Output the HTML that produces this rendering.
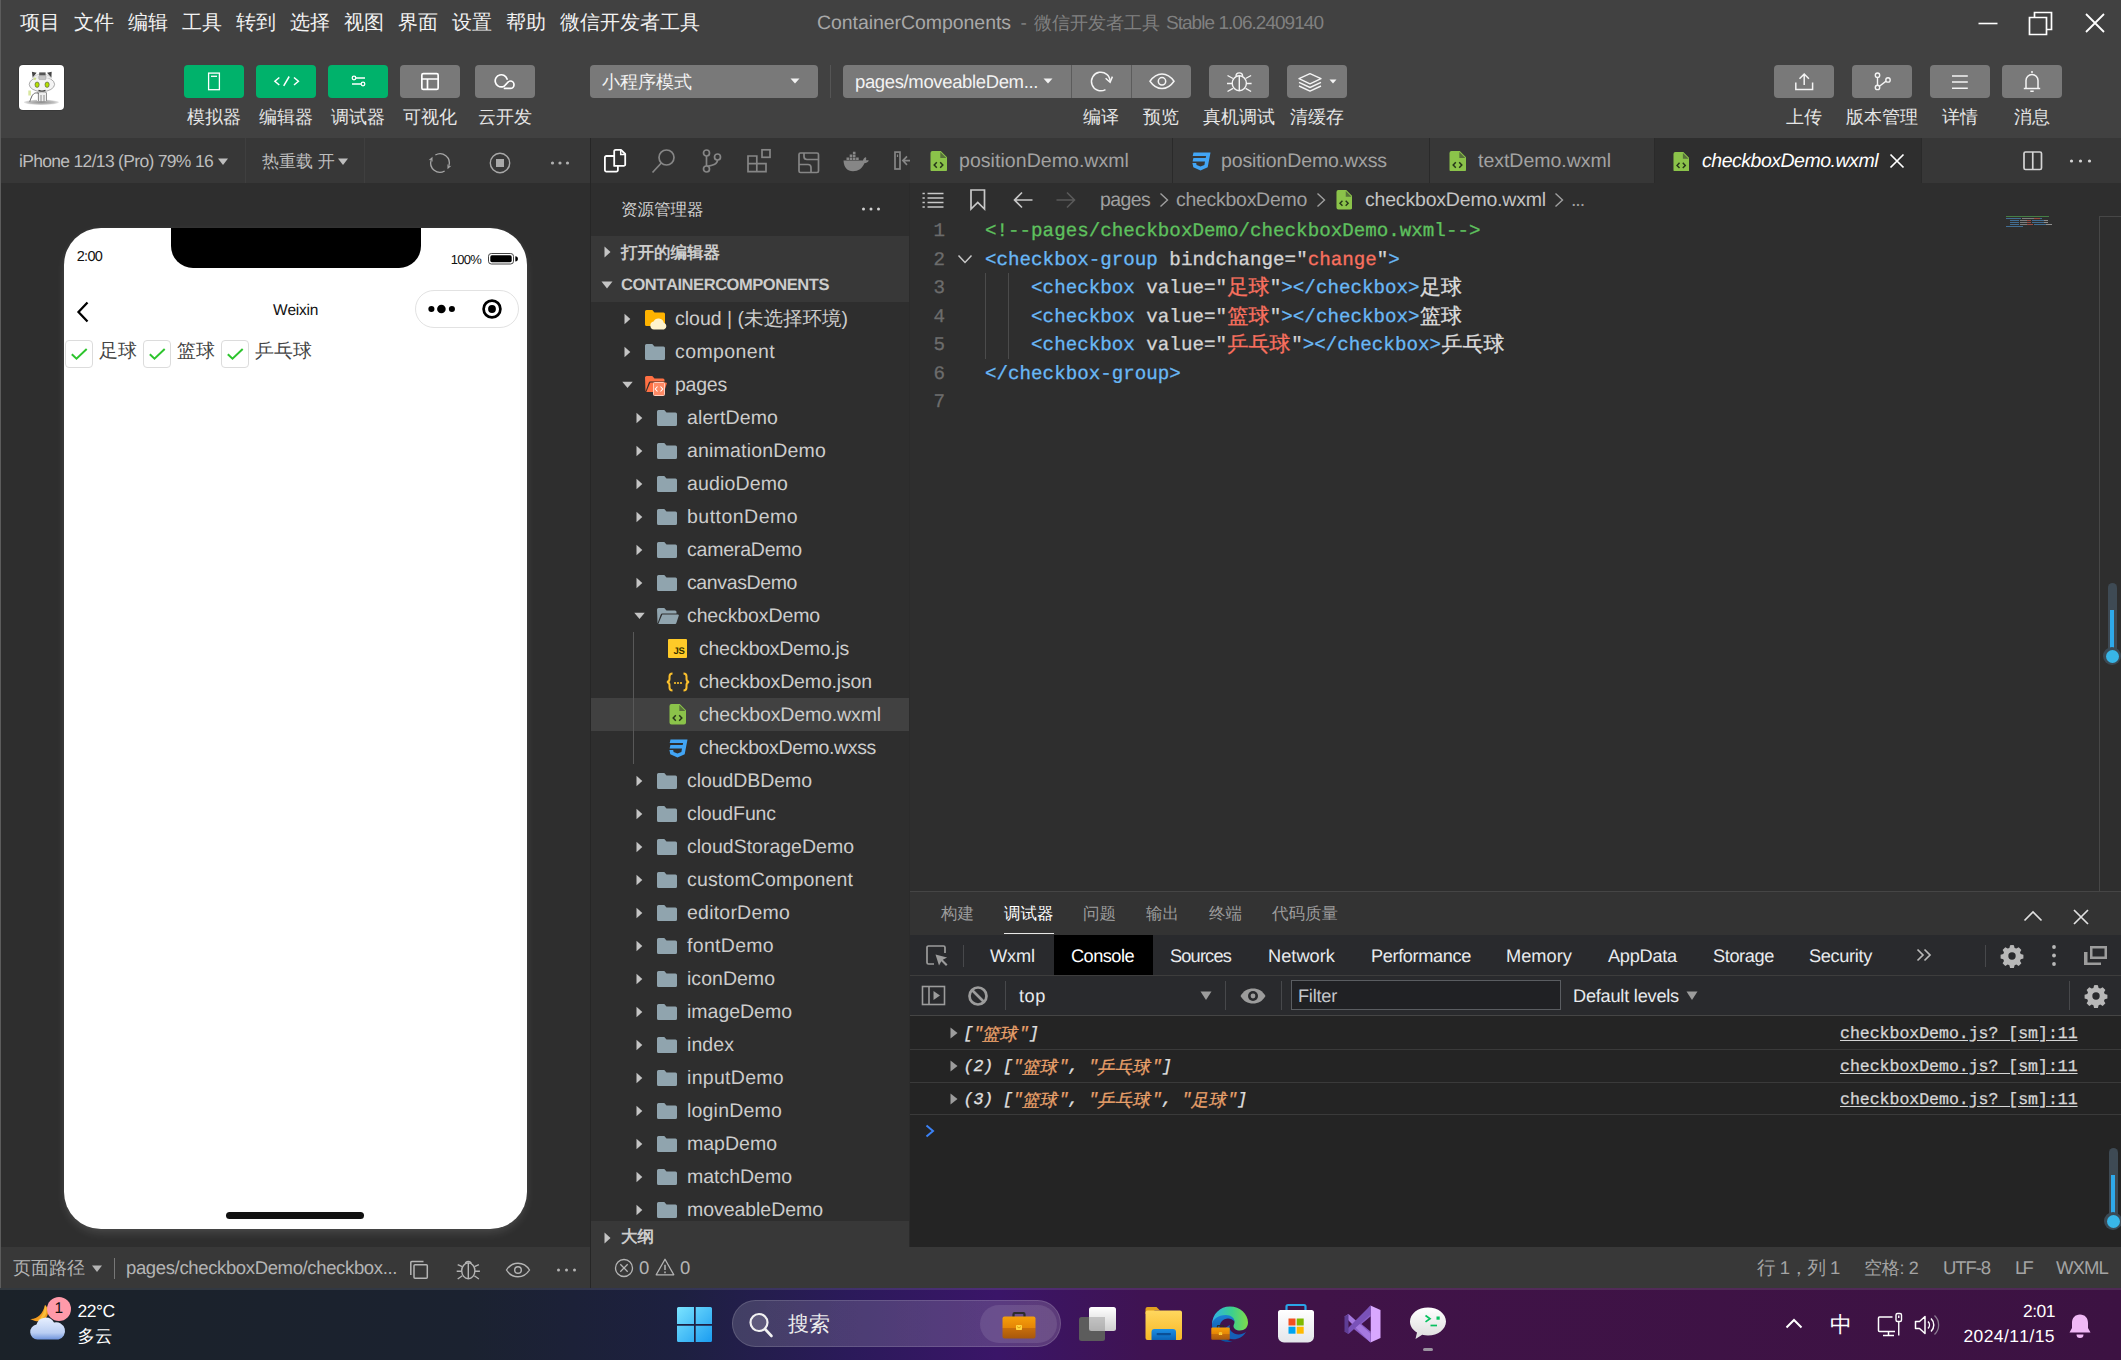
<!DOCTYPE html>
<html lang="zh"><head><meta charset="utf-8"><title>ContainerComponents</title><style>
html,body{margin:0;padding:0;background:#2e2e2e;}
body{width:2121px;height:1360px;overflow:hidden;position:relative;font-family:"Liberation Sans",sans-serif;}
#r{position:absolute;left:0;top:0;width:2121px;height:1360px;overflow:hidden;}
#r div,#r svg,#r span.a{position:absolute;white-space:nowrap;}
#r div{box-sizing:border-box;}
.m{font-family:"Liberation Mono",monospace;-webkit-text-stroke:0.3px currentColor;}
.s{font-family:"Liberation Serif",serif;}
.b{font-weight:bold;}
.i{font-style:italic;}
.cj{display:inline-block;font-size:21px;letter-spacing:0;text-align:center;font-family:"Liberation Sans",sans-serif;vertical-align:top;overflow:hidden;height:28px;}
.cj2{display:inline-block;font-size:17.5px;letter-spacing:0;text-align:center;font-family:"Liberation Sans",sans-serif;vertical-align:top;overflow:hidden;height:24px;font-style:normal;transform:skewX(-12deg);}
body{font-kerning:none;text-rendering:geometricPrecision;}
</style></head><body><div id="r">
<div style="left:0px;top:0px;width:2121px;height:138px;background:#414141;"></div>
<div style="left:0px;top:138px;width:590px;height:45px;background:#373737;"></div>
<div style="left:0px;top:183px;width:590px;height:1064px;background:#2e2e2e;"></div>
<div style="left:590px;top:138px;width:1px;height:1150px;background:#262626;"></div>
<div style="left:591px;top:138px;width:319px;height:45px;background:#333333;"></div>
<div style="left:591px;top:183px;width:319px;height:1064px;background:#2e2e2e;"></div>
<div style="left:910px;top:138px;width:1211px;height:45px;background:#373737;"></div>
<div style="left:910px;top:183px;width:1211px;height:708px;background:#2e2e2e;"></div>
<div style="left:0px;top:1247px;width:2121px;height:41px;background:#383838;"></div>
<div style="left:0px;top:1288px;width:2121px;height:72px;background:linear-gradient(90deg,#1b2229 0%,#1b2230 22%,#1d2040 32%,#2b1a5a 40%,#3a1568 47%,#3f1352 54%,#401348 62%,#3c1242 100%);"></div>
<div style="left:0px;top:1288px;width:2121px;height:2px;background:rgba(255,255,255,0.10);"></div>
<div style="left:590px;top:1247px;width:1px;height:41px;background:#262626;"></div>
<div style="left:20px;top:10px;height:26px;line-height:26px;font-size:20px;color:#f2f2f2;width:40px;">项目</div>
<div style="left:74px;top:10px;height:26px;line-height:26px;font-size:20px;color:#f2f2f2;width:40px;">文件</div>
<div style="left:128px;top:10px;height:26px;line-height:26px;font-size:20px;color:#f2f2f2;width:40px;">编辑</div>
<div style="left:182px;top:10px;height:26px;line-height:26px;font-size:20px;color:#f2f2f2;width:40px;">工具</div>
<div style="left:236px;top:10px;height:26px;line-height:26px;font-size:20px;color:#f2f2f2;width:40px;">转到</div>
<div style="left:290px;top:10px;height:26px;line-height:26px;font-size:20px;color:#f2f2f2;width:40px;">选择</div>
<div style="left:344px;top:10px;height:26px;line-height:26px;font-size:20px;color:#f2f2f2;width:40px;">视图</div>
<div style="left:398px;top:10px;height:26px;line-height:26px;font-size:20px;color:#f2f2f2;width:40px;">界面</div>
<div style="left:452px;top:10px;height:26px;line-height:26px;font-size:20px;color:#f2f2f2;width:40px;">设置</div>
<div style="left:506px;top:10px;height:26px;line-height:26px;font-size:20px;color:#f2f2f2;width:40px;">帮助</div>
<div style="left:560px;top:10px;height:26px;line-height:26px;font-size:20px;color:#f2f2f2;width:140px;">微信开发者工具</div>
<div style="left:817px;top:10.5px;height:25px;line-height:25px;font-size:19.5px;color:#a8a8a8;letter-spacing:-0.059px;">ContainerComponents</div>
<div style="left:1020.5px;top:10.5px;height:25px;line-height:25px;font-size:19px;color:#808080;">-</div>
<div style="left:1034px;top:11.5px;height:23px;line-height:23px;font-size:18px;color:#808080;width:127px;">微信开发者工具</div>
<div style="left:1166px;top:10.5px;height:25px;line-height:25px;font-size:19px;color:#808080;letter-spacing:-0.967px;">Stable 1.06.2409140</div>
<svg style="left:1975px;top:10px;" width="26" height="26" viewBox="0 0 26 26"><path d="M3.5 13.5H22.5" stroke="#fff" stroke-width="1.6" fill="none"/></svg>
<svg style="left:2027px;top:9px;" width="28" height="28" viewBox="0 0 28 28"><path d="M2.5 8.5H19.5V25.5H2.5Z M7.5 8V3.5H24.5V20.5H20" stroke="#fff" stroke-width="1.7" fill="none"/></svg>
<svg style="left:2082px;top:10px;" width="26" height="26" viewBox="0 0 26 26"><path d="M4 4L22 22M22 4L4 22" stroke="#fff" stroke-width="1.8" fill="none"/></svg>
<div style="left:19px;top:65px;width:45px;height:45px;background:#ffffff;border-radius:4px;box-shadow:0 0 0 0.5px rgba(0,0,0,.25);"></div>
<svg style="left:19px;top:65px;" width="45" height="45" viewBox="0 0 45 45">
<defs><radialGradient id="avs"><stop offset="0" stop-color="#8f8f8f"/><stop offset=".7" stop-color="#bdbdbd"/><stop offset="1" stop-color="#e8e8e8"/></radialGradient></defs>
<ellipse cx="22.4" cy="37.3" rx="17.5" ry="2.7" fill="url(#avs)"/>
<path d="M12.9 6.700l4.700 1-3.900 5z" fill="#444"/><path d="M32.700 6.700l-4.700 1 4.400 5z" fill="#444"/>
<ellipse cx="22.900" cy="19.300" rx="12.700" ry="7.300" fill="#f4f4f4" stroke="#8a8a8a" stroke-width="0.700"/>
<path d="M13 13.500c3-3.500 6-4.500 9.900-4.500s7 1 9.900 4.500" fill="#ececec" stroke="#b5b5b5" stroke-width="0.600"/>
<rect x="20.200" y="7.400" width="6.400" height="3.200" fill="#555"/><rect x="19.800" y="10.600" width="7.200" height="4" rx="0.800" fill="#c4c4c4" stroke="#9a9a9a" stroke-width="0.500"/>
<circle cx="15.800" cy="13.700" r="1.300" fill="#cfe08a"/>
<ellipse cx="18.100" cy="19.700" rx="2.100" ry="2.700" fill="#b4e000" stroke="#4a4a4a" stroke-width="0.600"/>
<ellipse cx="28.100" cy="19.700" rx="2.100" ry="2.700" fill="#b4e000" stroke="#4a4a4a" stroke-width="0.600"/>
<path d="M19.500 25.300c2 1 5 1 7 0" stroke="#444" stroke-width="1.100" fill="none"/>
<path d="M18 27.500h9.800v8.500H18z" fill="#eeeeee"/><path d="M18.300 27.500c1.500-.8 7.500-.8 9.300 0M19.500 28v8M22 30v6.500M25 30v6.500M27.500 28v8" stroke="#777" stroke-width="0.800" fill="none"/>
<path d="M19.500 28.500c-3-1.500-5.500 0-7 3.500s-1.500 4.500-1.800 4.800" stroke="#666" stroke-width="1" fill="none"/>
<rect x="9.300" y="25.500" width="2.600" height="5" fill="#cfe08a" opacity=".8"/>
</svg>
<div style="left:184px;top:65px;width:60px;height:33px;background:#00b26b;border-radius:4px;"></div>
<svg style="left:199.0px;top:66.5px;overflow:visible;" width="30" height="30" viewBox="0 0 30 30"><rect x="9.6" y="6.1" width="10.8" height="16.6" fill="none" stroke="#fff" stroke-width="1.3"/><path d="M12 9.3h6" stroke="#fff" stroke-width="1.3"/></svg>
<div style="left:187.0px;top:105.5px;height:23px;line-height:23px;font-size:18px;color:#e6e6e6;width:54px;text-align:center;">模拟器</div>
<div style="left:256px;top:65px;width:60px;height:33px;background:#00b26b;border-radius:4px;"></div>
<svg style="left:271.0px;top:66.5px;overflow:visible;" width="30" height="30" viewBox="0 0 30 30"><path d="M8.3 10.5L3.9 14.25l4.4 3.75M23 10.5l4.4 3.75L23 18M18.2 9.5l-5.5 9.4" fill="none" stroke="#fff" stroke-width="1.5"/></svg>
<div style="left:259.0px;top:105.5px;height:23px;line-height:23px;font-size:18px;color:#e6e6e6;width:54px;text-align:center;">编辑器</div>
<div style="left:328px;top:65px;width:60px;height:33px;background:#00b26b;border-radius:4px;"></div>
<svg style="left:343.0px;top:66.5px;overflow:visible;" width="30" height="30" viewBox="0 0 30 30"><path d="M12.8 11H22M9 17h9.2" stroke="#fff" stroke-width="1.3"/><circle cx="11" cy="11" r="1.8" fill="none" stroke="#fff" stroke-width="1.3"/><circle cx="20" cy="17" r="1.8" fill="none" stroke="#fff" stroke-width="1.3"/></svg>
<div style="left:331.0px;top:105.5px;height:23px;line-height:23px;font-size:18px;color:#e6e6e6;width:54px;text-align:center;">调试器</div>
<div style="left:400px;top:65px;width:60px;height:33px;background:#797979;border-radius:4px;"></div>
<svg style="left:415.0px;top:66.5px;overflow:visible;" width="30" height="30" viewBox="0 0 30 30"><rect x="6.85" y="6.55" width="16.3" height="15.9" rx="1.5" fill="none" stroke="#fff" stroke-width="1.7"/><path d="M6.85 12h16.3M12.5 12v10.4" stroke="#fff" stroke-width="1.7"/></svg>
<div style="left:403.0px;top:105.5px;height:23px;line-height:23px;font-size:18px;color:#e6e6e6;width:54px;text-align:center;">可视化</div>
<div style="left:475px;top:65px;width:60px;height:33px;background:#797979;border-radius:4px;"></div>
<svg style="left:490.0px;top:66.5px;overflow:visible;" width="30" height="30" viewBox="0 0 30 30"><path d="M17.06 12.1A6.05 6.05 0 1 0 12.31 19.79C15.5 20.3 16.5 14 20.3 14A3.7 3.7 0 0 1 20.3 21.4H14.5" fill="none" stroke="#fff" stroke-width="1.7" stroke-linecap="round"/></svg>
<div style="left:478.0px;top:105.5px;height:23px;line-height:23px;font-size:18px;color:#e6e6e6;width:54px;text-align:center;">云开发</div>
<div style="left:590px;top:65px;width:228px;height:33px;background:#797979;border-radius:4px;"></div>
<div style="left:602px;top:70.5px;height:23px;line-height:23px;font-size:18px;color:#f2f2f2;width:90px;">小程序模式</div>
<svg style="left:789px;top:77px;" width="12" height="8" viewBox="0 0 12 8"><path d="M1.5 1.5h9L6 6.5z" fill="#f2f2f2"/></svg>
<div style="left:830px;top:65px;width:1px;height:33px;background:#555;"></div>
<div style="left:843px;top:65px;width:348px;height:33px;background:#797979;border-radius:4px;"></div>
<div style="left:1071px;top:65px;width:1px;height:33px;background:#5c5c5c;"></div>
<div style="left:1131px;top:65px;width:1px;height:33px;background:#5c5c5c;"></div>
<div style="left:855px;top:70px;height:24px;line-height:24px;font-size:18.5px;color:#f2f2f2;letter-spacing:-0.362px;">pages/moveableDem...</div>
<svg style="left:1042px;top:77px;" width="12" height="8" viewBox="0 0 12 8"><path d="M1.5 1.5h9L6 6.5z" fill="#f2f2f2"/></svg>
<svg style="left:1086px;top:66.5px;" width="30" height="30" viewBox="0 0 30 30"><path d="M19.45 22.55A9.3 9.3 0 1 1 24.1 14.5" fill="none" stroke="#f4f4f4" stroke-width="1.5"/><path d="M19.6 11.2l4.5 4 2.3-5.600" fill="none" stroke="#f4f4f4" stroke-width="1.5"/></svg>
<svg style="left:1146px;top:66.5px;" width="30" height="30" viewBox="0 0 30 30"><path d="M4 14.3C8 8.5 12 7 16 7s8 1.5 12 7.3c-4 5.8-8 7.3-12 7.3S8 20.1 4 14.3z" fill="none" stroke="#f4f4f4" stroke-width="1.5"/><circle cx="16" cy="14.3" r="3.7" fill="none" stroke="#f4f4f4" stroke-width="1.5"/></svg>
<div style="left:1083px;top:105.5px;height:23px;line-height:23px;font-size:18px;color:#e6e6e6;width:36px;">编译</div>
<div style="left:1143px;top:105.5px;height:23px;line-height:23px;font-size:18px;color:#e6e6e6;width:36px;">预览</div>
<div style="left:1209px;top:65px;width:60px;height:33px;background:#797979;border-radius:4px;"></div>
<svg style="left:1224.0px;top:66.5px;overflow:visible;" width="30" height="30" viewBox="0 0 30 30"><ellipse cx="15.3" cy="16.3" rx="7.1" ry="7.5" fill="none" stroke="#f4f4f4" stroke-width="1.4"/><path d="M15.3 8.8v15M12 9.2a3.300 3.300 0 0 1 6.600 0M9 11.5L3.5 8.5M8.2 16.5H3M9 21.3l-5.500 3.200M21.600 11.5l5.500-3M22.400 16.5h5.200M21.600 21.3l5.500 3.200" fill="none" stroke="#f4f4f4" stroke-width="1.4"/></svg>
<div style="left:1203.0px;top:105.5px;height:23px;line-height:23px;font-size:18px;color:#e6e6e6;width:72px;text-align:center;">真机调试</div>
<div style="left:1287px;top:65px;width:60px;height:33px;background:#797979;border-radius:4px;"></div>
<svg style="left:1302.0px;top:66.5px;overflow:visible;" width="30" height="30" viewBox="0 0 30 30"><path d="M8 6.7L-3 11.7l11 5.100 11-5.100z M-3 15.400l11 5.100 11-5.100 M-3 19l11 5.100 11-5.100" fill="none" stroke="#f4f4f4" stroke-width="1.4" stroke-linejoin="round"/><path d="M27.500 12.500h7l-3.500 4z" fill="#f4f4f4"/></svg>
<div style="left:1290.0px;top:105.5px;height:23px;line-height:23px;font-size:18px;color:#e6e6e6;width:54px;text-align:center;">清缓存</div>
<div style="left:1774px;top:65px;width:60px;height:33px;background:#797979;border-radius:4px;"></div>
<svg style="left:1789.0px;top:66.5px;overflow:visible;" width="30" height="30" viewBox="0 0 30 30"><path d="M6.800 15.500v7.100h16.800v-7.100M15.200 18V7M10.500 11.800L15.200 7l4.700 4.800" fill="none" stroke="#f4f4f4" stroke-width="1.5"/></svg>
<div style="left:1786.0px;top:105.5px;height:23px;line-height:23px;font-size:18px;color:#e6e6e6;width:36px;text-align:center;">上传</div>
<div style="left:1852px;top:65px;width:60px;height:33px;background:#797979;border-radius:4px;"></div>
<svg style="left:1867.0px;top:66.5px;overflow:visible;" width="30" height="30" viewBox="0 0 30 30"><circle cx="10.500" cy="8.200" r="2.200" fill="none" stroke="#f4f4f4" stroke-width="1.4"/><circle cx="10.500" cy="20.400" r="2.200" fill="none" stroke="#f4f4f4" stroke-width="1.4"/><circle cx="21" cy="12.900" r="2.200" fill="none" stroke="#f4f4f4" stroke-width="1.4"/><path d="M10.500 10.400v7.800M12.400 19.200l6.700-5.100" fill="none" stroke="#f4f4f4" stroke-width="1.4"/></svg>
<div style="left:1846.0px;top:105.5px;height:23px;line-height:23px;font-size:18px;color:#e6e6e6;width:72px;text-align:center;">版本管理</div>
<div style="left:1930px;top:65px;width:60px;height:33px;background:#797979;border-radius:4px;"></div>
<svg style="left:1945.0px;top:66.5px;overflow:visible;" width="30" height="30" viewBox="0 0 30 30"><path d="M7 8.900h15.800M7 15.100h15.800M7 21.300h15.800" stroke="#f4f4f4" stroke-width="1.5"/></svg>
<div style="left:1942.0px;top:105.5px;height:23px;line-height:23px;font-size:18px;color:#e6e6e6;width:36px;text-align:center;">详情</div>
<div style="left:2002px;top:65px;width:60px;height:33px;background:#797979;border-radius:4px;"></div>
<svg style="left:2017.0px;top:66.5px;overflow:visible;" width="30" height="30" viewBox="0 0 30 30"><path d="M9 21.500v-8a6 6 0 0 1 12 0v8M6.800 21.500h16.400M13.300 24.200h3.400" fill="none" stroke="#f4f4f4" stroke-width="1.5"/><circle cx="15" cy="5" r="1" fill="#f4f4f4"/></svg>
<div style="left:2014.0px;top:105.5px;height:23px;line-height:23px;font-size:18px;color:#e6e6e6;width:36px;text-align:center;">消息</div>
<div style="left:0px;top:0px;width:1px;height:1288px;background:#5c5c5c;"></div>
<div style="left:245px;top:138px;width:1px;height:45px;background:#3f3f3f;"></div>
<div style="left:364px;top:138px;width:1px;height:45px;background:#3f3f3f;"></div>
<div style="left:19px;top:150px;height:23px;line-height:23px;font-size:17.5px;color:#bdbdbd;letter-spacing:-0.685px;">iPhone 12/13 (Pro) 79% 16</div>
<svg style="left:217px;top:157px;" width="12" height="9" viewBox="0 0 12 9"><path d="M1 1.500h10L6 8z" fill="#bdbdbd"/></svg>
<div style="left:262px;top:150.5px;height:22px;line-height:22px;font-size:17px;color:#bdbdbd;width:74px;">热重载 开</div>
<svg style="left:337px;top:157px;" width="12" height="9" viewBox="0 0 12 9"><path d="M1 1.500h10L6 8z" fill="#bdbdbd"/></svg>
<svg style="left:426px;top:149px;" width="28" height="28" viewBox="0 0 28 28"><path d="M9.35 5.95A9.3 9.3 0 0 1 22.84 16.87M18.65 22.05A9.3 9.3 0 0 1 5.16 11.13" fill="none" stroke="#a6a6a6" stroke-width="1.3"/><path d="M21.50 20.27L25.43 16.68L22.74 17.21L21.44 15.07zM6.50 7.73L2.57 11.32L5.26 10.79L6.56 12.93z" fill="#a6a6a6"/></svg>
<svg style="left:486px;top:149px;" width="28" height="28" viewBox="0 0 28 28"><circle cx="14" cy="14" r="9.700" fill="none" stroke="#a8a8a8" stroke-width="1.400"/><rect x="10" y="10" width="8" height="8" fill="#a8a8a8"/></svg>
<svg style="left:548px;top:158px;" width="24" height="10" viewBox="0 0 24 10"><circle cx="4.500" cy="5" r="1.600" fill="#b0b0b0"/><circle cx="12" cy="5" r="1.600" fill="#b0b0b0"/><circle cx="19.500" cy="5" r="1.600" fill="#b0b0b0"/></svg>
<div style="left:64px;top:228px;width:463px;height:1001px;background:#ffffff;border-radius:37px;box-shadow:0 5px 10px -1px rgba(255,255,255,0.12),0 0 6px rgba(255,255,255,0.04);"></div>
<div style="left:171px;top:228px;width:250px;height:40px;background:#000000;border-radius:0 0 22px 22px;"></div>
<div style="left:76.7px;top:247.5px;height:19px;line-height:19px;font-size:14.5px;color:#111;letter-spacing:-0.680px;">2:00</div>
<div style="left:450.7px;top:250.7px;height:17px;line-height:17px;font-size:13px;color:#111;letter-spacing:-0.737px;">100%</div>
<svg style="left:487px;top:252px;" width="32" height="14" viewBox="0 0 32 14"><rect x="1.500" y="1.500" width="25" height="10.500" rx="2.800" fill="none" stroke="#444" stroke-width="1"/><rect x="3.300" y="3.300" width="21.400" height="6.900" rx="1.600" fill="#000"/><path d="M28.300 4.200a2.600 2.600 0 0 1 0 5.200z" fill="#000"/></svg>
<svg style="left:74px;top:300px;" width="18" height="24" viewBox="0 0 18 24"><path d="M13.500 2.500L4.500 12l9 9.500" fill="none" stroke="#000" stroke-width="2.300"/></svg>
<div style="left:273px;top:301px;height:20px;line-height:20px;font-size:15.5px;color:#111;letter-spacing:-0.251px;">Weixin</div>
<div style="left:415px;top:289.5px;width:104px;height:38px;background:#ffffff;border:1px solid #e2e2e2;border-radius:19px;"></div>
<svg style="left:426px;top:302.6px;" width="30" height="12" viewBox="0 0 30 12"><circle cx="5.4" cy="6" r="3.05" fill="#000"/><circle cx="15.4" cy="6" r="4.3" fill="#000"/><circle cx="25.900" cy="6" r="3.05" fill="#000"/></svg>
<svg style="left:481.3px;top:297.6px;" width="22" height="22" viewBox="0 0 22 22"><circle cx="11" cy="11" r="8.400" fill="none" stroke="#000" stroke-width="2.700"/><circle cx="11" cy="11" r="3.900" fill="#000"/></svg>
<div style="left:65px;top:340px;width:28px;height:28px;background:#ffffff;border:1px solid #dcdcdc;border-radius:4px;"></div>
<svg style="left:70px;top:345px;" width="18" height="18" viewBox="0 0 18 18"><path d="M1.800 9.300l4.700 4.400L16.700 4.100" fill="none" stroke="#2dc42d" stroke-width="2"/></svg>
<div style="left:99px;top:338.5px;height:25px;line-height:25px;font-size:19px;color:#444;width:38px;">足球</div>
<div style="left:143px;top:340px;width:28px;height:28px;background:#ffffff;border:1px solid #dcdcdc;border-radius:4px;"></div>
<svg style="left:148px;top:345px;" width="18" height="18" viewBox="0 0 18 18"><path d="M1.800 9.300l4.700 4.400L16.700 4.100" fill="none" stroke="#2dc42d" stroke-width="2"/></svg>
<div style="left:177px;top:338.5px;height:25px;line-height:25px;font-size:19px;color:#444;width:38px;">篮球</div>
<div style="left:221px;top:340px;width:28px;height:28px;background:#ffffff;border:1px solid #dcdcdc;border-radius:4px;"></div>
<svg style="left:226px;top:345px;" width="18" height="18" viewBox="0 0 18 18"><path d="M1.800 9.300l4.700 4.400L16.700 4.100" fill="none" stroke="#2dc42d" stroke-width="2"/></svg>
<div style="left:255px;top:338.5px;height:25px;line-height:25px;font-size:19px;color:#444;width:57px;">乒乓球</div>
<div style="left:226px;top:1212px;width:138px;height:7px;background:#111111;border-radius:4px;"></div>
<div style="left:13px;top:1256.5px;height:23px;line-height:23px;font-size:18px;color:#b4b4b4;width:72px;">页面路径</div>
<svg style="left:91px;top:1264px;" width="12" height="9" viewBox="0 0 12 9"><path d="M1 1.500h10L6 8z" fill="#b4b4b4"/></svg>
<div style="left:114px;top:1258px;width:1px;height:21px;background:#777;"></div>
<div style="left:126px;top:1256px;height:24px;line-height:24px;font-size:18.5px;color:#b4b4b4;letter-spacing:-0.359px;">pages/checkboxDemo/checkbox...</div>
<svg style="left:408px;top:1257px;" width="24" height="24" viewBox="0 0 24 24"><rect x="6" y="7.7" width="13.3" height="13.6" rx="1" fill="none" stroke="#b4b4b4" stroke-width="1.5"/><path d="M2.8 18V5.5a1 1 0 0 1 1-1H15.5" fill="none" stroke="#b4b4b4" stroke-width="1.5"/></svg>
<svg style="left:455px;top:1255px;" width="28" height="28" viewBox="0 0 28 28"><ellipse cx="13.3" cy="15.8" rx="6.6" ry="7.9" fill="none" stroke="#b4b4b4" stroke-width="1.4"/><path d="M13.3 7.9v15.800M10.300 8.800a3.100 3.100 0 0 1 6 0M7.200 11.700L2.700 9.600M6.700 16.300H1.700M7.300 20.800l-4.600 3.200M19.400 11.700l4.500-2.100M19.900 16.300h5M19.300 20.800l4.600 3.200" fill="none" stroke="#b4b4b4" stroke-width="1.4"/></svg>
<svg style="left:504px;top:1258px;" width="28" height="24" viewBox="0 0 28 24"><path d="M2.500 12c3-4.800 6.800-6.800 11.500-6.800s8.500 2 11.500 6.800c-3 4.800-6.800 6.800-11.500 6.800S5.500 16.800 2.500 12z" fill="none" stroke="#b4b4b4" stroke-width="1.400"/><circle cx="14" cy="12" r="3.300" fill="none" stroke="#b4b4b4" stroke-width="1.400"/></svg>
<svg style="left:555px;top:1265px;" width="24" height="10" viewBox="0 0 24 10"><circle cx="3.500" cy="5" r="1.500" fill="#b4b4b4"/><circle cx="11.500" cy="5" r="1.500" fill="#b4b4b4"/><circle cx="19.500" cy="5" r="1.500" fill="#b4b4b4"/></svg>
<svg style="left:602px;top:147px;" width="28" height="28" viewBox="0 0 28 28"><path d="M12.2 9H4.4a1.5 1.5 0 0 0-1.5 1.5V23.1a1.5 1.5 0 0 0 1.5 1.5H14.4a1.5 1.5 0 0 0 1.5-1.5V18.9" fill="none" stroke="#ffffff" stroke-width="1.8"/><path d="M12.2 18.9V4.3a1.5 1.5 0 0 1 1.5-1.5H19L23.2 7V17.4a1.5 1.5 0 0 1-1.5 1.5z" fill="none" stroke="#ffffff" stroke-width="1.8" stroke-linejoin="round"/><path d="M18.7 3.2V7.4h4.200" fill="none" stroke="#ffffff" stroke-width="1.5"/></svg>
<svg style="left:650px;top:147px;" width="28" height="28" viewBox="0 0 28 28"><circle cx="16.500" cy="10.500" r="7.500" fill="none" stroke="#868686" stroke-width="1.700"/><path d="M11.300 16L2.500 25.500" stroke="#868686" stroke-width="1.700"/></svg>
<svg style="left:698px;top:147px;" width="28" height="28" viewBox="0 0 28 28"><circle cx="8.500" cy="6" r="3" fill="none" stroke="#868686" stroke-width="1.700"/><circle cx="8.500" cy="22" r="3" fill="none" stroke="#868686" stroke-width="1.700"/><circle cx="19.500" cy="10" r="3" fill="none" stroke="#868686" stroke-width="1.700"/><path d="M8.500 9v10M19.500 13c0 4-4 5-10 6.300" fill="none" stroke="#868686" stroke-width="1.700"/></svg>
<svg style="left:745px;top:147px;" width="28" height="28" viewBox="0 0 28 28"><path d="M3 9H11.8V16.7H21V24.6H3zM3 16.7H11.8M11.8 16.7V24.6" fill="none" stroke="#868686" stroke-width="1.7"/><rect x="17" y="2.8" width="8" height="7.5" fill="none" stroke="#868686" stroke-width="1.7"/></svg>
<svg style="left:796px;top:147px;" width="28" height="28" viewBox="0 0 28 28"><rect x="3" y="6" width="19.500" height="19.500" rx="1.500" fill="none" stroke="#868686" stroke-width="1.700"/><path d="M8 6v3.500c0 2 1 3 3 3h11.500M3 17.500h9c2 0 3 1 3 3v5" fill="none" stroke="#868686" stroke-width="1.700"/></svg>
<svg style="left:842px;top:147px;" width="28" height="28" viewBox="0 0 28 28"><path d="M1.500 13.500h19.500c.3-2 1.500-3 3-3.300.4 1.200.3 2.200-.1 3 1-.1 2.300 0 3 .4-1 2-2.800 2.600-4.500 2.600-2 5-6 8-11.500 8-5.500 0-9-3.500-9.400-10.700z" fill="#868686"/><path d="M4.500 10.500h2.600v2.400H4.500zM7.700 10.500h2.600v2.400H7.700zM10.900 10.500h2.600v2.400h-2.600zM14.100 10.500h2.600v2.400h-2.600zM7.700 7.600h2.600V10H7.700zM10.900 7.600h2.600V10h-2.600zM10.900 4.700h2.600v2.400h-2.600z" fill="#868686"/></svg>
<svg style="left:892px;top:147px;" width="18" height="28" viewBox="0 0 18 28"><rect x="3" y="5.1" width="5" height="16.900" fill="none" stroke="#868686" stroke-width="1.7"/><path d="M5.5 7.5v2.500" stroke="#868686" stroke-width="1.2"/><path d="M19 13.600h-8M15 9.400l-4.100 4.200 4.100 4.200" fill="none" stroke="#868686" stroke-width="1.7"/></svg>
<div style="left:621px;top:199.5px;height:21px;line-height:21px;font-size:16.5px;color:#d0d0d0;width:83px;">资源管理器</div>
<svg style="left:860px;top:204px;" width="24" height="10" viewBox="0 0 24 10"><circle cx="3.500" cy="5" r="1.500" fill="#d0d0d0"/><circle cx="11" cy="5" r="1.500" fill="#d0d0d0"/><circle cx="18.500" cy="5" r="1.500" fill="#d0d0d0"/></svg>
<div style="left:591px;top:236px;width:318px;height:66px;background:#383838;"></div>
<svg style="left:602px;top:244px;" width="12" height="16" viewBox="0 0 12 16"><path d="M2.500 2.500v11l6-5.500z" fill="#c4c4c4"/></svg>
<div class="b" style="left:621px;top:243px;height:21px;line-height:21px;font-size:16.5px;color:#cccccc;width:99px;">打开的编辑器</div>
<svg style="left:600px;top:279px;" width="14" height="12" viewBox="0 0 14 12"><path d="M1.500 2.500h11L7 9.500z" fill="#c4c4c4"/></svg>
<div class="b" style="left:621px;top:275px;height:21px;line-height:21px;font-size:16.5px;color:#cccccc;letter-spacing:-0.439px;">CONTAINERCOMPONENTS</div>
<div style="left:591px;top:698px;width:318px;height:33px;background:#414141;"></div>
<div style="left:633px;top:632px;width:1px;height:132px;background:#585858;"></div>
<svg style="left:622.5px;top:311.5px;" width="9" height="14" viewBox="0 0 9 14"><path d="M1.500 1.800v10.400l5.800-5.200z" fill="#c4c4c4"/></svg>
<svg style="left:643.5px;top:308.5px;" width="22" height="18" viewBox="0 0 22 18"><path d="M1 2.500a1.500 1.500 0 0 1 1.500-1.500h5.800l2.200 2.500h9a1.500 1.500 0 0 1 1.500 1.500v10.500a1.500 1.500 0 0 1-1.500 1.500h-17A1.500 1.500 0 0 1 1 15.500z" fill="#ffb300"/></svg>
<svg style="left:648.5px;top:316.5px;" width="20" height="13" viewBox="0 0 20 13"><path d="M5 12.500a4 4 0 0 1-.5-7.900 5.500 5.500 0 0 1 10.300 1.200 3.500 3.500 0 0 1 .2 6.700z" fill="#fff3cd"/></svg>
<div style="left:675px;top:306.5px;height:25px;line-height:25px;font-size:19.5px;color:#cccccc;letter-spacing:-0.000px;">cloud | (未选择环境)</div>
<svg style="left:622.5px;top:344.5px;" width="9" height="14" viewBox="0 0 9 14"><path d="M1.500 1.800v10.400l5.800-5.200z" fill="#c4c4c4"/></svg>
<svg style="left:643.5px;top:342.5px;" width="22" height="18" viewBox="0 0 22 18"><path d="M1 2.500a1.500 1.500 0 0 1 1.500-1.500h5.800l2.200 2.500h9a1.500 1.500 0 0 1 1.500 1.500v10.500a1.500 1.500 0 0 1-1.500 1.500h-17A1.500 1.500 0 0 1 1 15.500z" fill="#90a4ae"/></svg>
<div style="left:675px;top:339.5px;height:25px;line-height:25px;font-size:19.5px;color:#cccccc;letter-spacing:0.391px;">component</div>
<svg style="left:620.5px;top:379.5px;" width="13" height="10" viewBox="0 0 13 10"><path d="M1.300 1.800h10.400L6.500 8z" fill="#c4c4c4"/></svg>
<svg style="left:643.5px;top:374.5px;" width="23" height="18" viewBox="0 0 23 18"><path d="M1 2.500a1.500 1.500 0 0 1 1.500-1.500h5.800l2.200 2.500h8.500a1.500 1.500 0 0 1 1.500 1.500v1.500H6.500a2 2 0 0 0-1.900 1.400L1.500 16.500z" fill="#ff7043"/><path d="M6.300 7.500h15.500a1 1 0 0 1 .95 1.300l-2.500 7.500a1 1 0 0 1-.95.700H2.300z" fill="#ff7043"/></svg>
<div style="left:652.5px;top:381.5px;width:12px;height:14px;background:#ff8a65;border-radius:1.500px;border:1px solid #ffccbc;"></div>
<svg style="left:653.5px;top:384.5px;" width="10" height="8" viewBox="0 0 10 8"><path d="M3.500 1.500L1.300 4l2.200 2.500M6.500 1.500L8.700 4 6.500 6.500" fill="none" stroke="#fff" stroke-width="1.100"/></svg>
<div style="left:675px;top:372.5px;height:25px;line-height:25px;font-size:19.5px;color:#cccccc;letter-spacing:-0.226px;">pages</div>
<svg style="left:634.5px;top:410.5px;" width="9" height="14" viewBox="0 0 9 14"><path d="M1.500 1.800v10.400l5.800-5.200z" fill="#c4c4c4"/></svg>
<svg style="left:655.5px;top:408.5px;" width="22" height="18" viewBox="0 0 22 18"><path d="M1 2.500a1.500 1.500 0 0 1 1.500-1.500h5.800l2.200 2.500h9a1.500 1.500 0 0 1 1.500 1.500v10.500a1.500 1.500 0 0 1-1.500 1.500h-17A1.500 1.500 0 0 1 1 15.500z" fill="#90a4ae"/></svg>
<div style="left:687px;top:405.5px;height:25px;line-height:25px;font-size:19.5px;color:#cccccc;letter-spacing:0.116px;">alertDemo</div>
<svg style="left:634.5px;top:443.5px;" width="9" height="14" viewBox="0 0 9 14"><path d="M1.500 1.800v10.400l5.800-5.200z" fill="#c4c4c4"/></svg>
<svg style="left:655.5px;top:441.5px;" width="22" height="18" viewBox="0 0 22 18"><path d="M1 2.500a1.500 1.500 0 0 1 1.500-1.500h5.800l2.200 2.500h9a1.500 1.500 0 0 1 1.500 1.500v10.500a1.500 1.500 0 0 1-1.500 1.500h-17A1.500 1.500 0 0 1 1 15.500z" fill="#90a4ae"/></svg>
<div style="left:687px;top:438.5px;height:25px;line-height:25px;font-size:19.5px;color:#cccccc;letter-spacing:0.187px;">animationDemo</div>
<svg style="left:634.5px;top:476.5px;" width="9" height="14" viewBox="0 0 9 14"><path d="M1.500 1.800v10.400l5.800-5.200z" fill="#c4c4c4"/></svg>
<svg style="left:655.5px;top:474.5px;" width="22" height="18" viewBox="0 0 22 18"><path d="M1 2.500a1.500 1.500 0 0 1 1.500-1.500h5.800l2.200 2.500h9a1.500 1.500 0 0 1 1.500 1.500v10.500a1.500 1.500 0 0 1-1.500 1.500h-17A1.500 1.500 0 0 1 1 15.500z" fill="#90a4ae"/></svg>
<div style="left:687px;top:471.5px;height:25px;line-height:25px;font-size:19.5px;color:#cccccc;letter-spacing:0.141px;">audioDemo</div>
<svg style="left:634.5px;top:509.5px;" width="9" height="14" viewBox="0 0 9 14"><path d="M1.500 1.800v10.400l5.800-5.200z" fill="#c4c4c4"/></svg>
<svg style="left:655.5px;top:507.5px;" width="22" height="18" viewBox="0 0 22 18"><path d="M1 2.500a1.500 1.500 0 0 1 1.500-1.500h5.800l2.200 2.500h9a1.500 1.500 0 0 1 1.500 1.500v10.500a1.500 1.500 0 0 1-1.500 1.500h-17A1.500 1.500 0 0 1 1 15.500z" fill="#90a4ae"/></svg>
<div style="left:687px;top:504.5px;height:25px;line-height:25px;font-size:19.5px;color:#cccccc;letter-spacing:0.477px;">buttonDemo</div>
<svg style="left:634.5px;top:542.5px;" width="9" height="14" viewBox="0 0 9 14"><path d="M1.500 1.800v10.400l5.800-5.200z" fill="#c4c4c4"/></svg>
<svg style="left:655.5px;top:540.5px;" width="22" height="18" viewBox="0 0 22 18"><path d="M1 2.500a1.500 1.500 0 0 1 1.500-1.500h5.800l2.200 2.500h9a1.500 1.500 0 0 1 1.500 1.500v10.500a1.500 1.500 0 0 1-1.500 1.500h-17A1.500 1.500 0 0 1 1 15.500z" fill="#90a4ae"/></svg>
<div style="left:687px;top:537.5px;height:25px;line-height:25px;font-size:19.5px;color:#cccccc;letter-spacing:-0.204px;">cameraDemo</div>
<svg style="left:634.5px;top:575.5px;" width="9" height="14" viewBox="0 0 9 14"><path d="M1.500 1.800v10.400l5.800-5.200z" fill="#c4c4c4"/></svg>
<svg style="left:655.5px;top:573.5px;" width="22" height="18" viewBox="0 0 22 18"><path d="M1 2.500a1.500 1.500 0 0 1 1.500-1.500h5.800l2.200 2.500h9a1.500 1.500 0 0 1 1.500 1.500v10.500a1.500 1.500 0 0 1-1.500 1.500h-17A1.500 1.500 0 0 1 1 15.500z" fill="#90a4ae"/></svg>
<div style="left:687px;top:570.5px;height:25px;line-height:25px;font-size:19.5px;color:#cccccc;letter-spacing:-0.380px;">canvasDemo</div>
<svg style="left:632.5px;top:610.5px;" width="13" height="10" viewBox="0 0 13 10"><path d="M1.300 1.800h10.400L6.500 8z" fill="#c4c4c4"/></svg>
<svg style="left:655.5px;top:606.5px;" width="23" height="18" viewBox="0 0 23 18"><path d="M1 2.500a1.500 1.500 0 0 1 1.500-1.500h5.800l2.200 2.500h8.500a1.500 1.500 0 0 1 1.500 1.500v1.500H6.500a2 2 0 0 0-1.900 1.400L1.500 16.500z" fill="#90a4ae"/><path d="M6.300 7.500h15.500a1 1 0 0 1 .95 1.300l-2.500 7.500a1 1 0 0 1-.95.700H2.300z" fill="#90a4ae"/></svg>
<div style="left:687px;top:603.5px;height:25px;line-height:25px;font-size:19.5px;color:#cccccc;letter-spacing:-0.117px;">checkboxDemo</div>
<div style="left:668px;top:639.0px;width:19px;height:19px;background:#ffca28;border-radius:1px;"></div>
<div class="b" style="left:673.5px;top:647px;height:10px;line-height:10px;font-size:9.5px;color:#3a3200;letter-spacing:-0.3px;">JS</div>
<div style="left:699px;top:636.5px;height:25px;line-height:25px;font-size:19.5px;color:#cccccc;letter-spacing:-0.260px;">checkboxDemo.js</div>
<svg style="left:665px;top:670.5px;" width="26" height="22" viewBox="0 0 26 22"><path d="M7.500 2.500c-2.500 0-3 1-3 3v2.500c0 1.800-.8 2.700-2.500 3 1.700.3 2.500 1.200 2.500 3v2.500c0 2 .5 3 3 3M18.500 2.500c2.500 0 3 1 3 3v2.500c0 1.800.8 2.700 2.500 3-1.700.3-2.500 1.200-2.500 3v2.500c0 2-.5 3-3 3" fill="none" stroke="#fbc02d" stroke-width="2"/><circle cx="10" cy="12" r="1.100" fill="#fbc02d"/><circle cx="13" cy="12" r="1.100" fill="#fbc02d"/><circle cx="16" cy="12" r="1.100" fill="#fbc02d"/></svg>
<div style="left:699px;top:669.5px;height:25px;line-height:25px;font-size:19.5px;color:#cccccc;letter-spacing:-0.152px;">checkboxDemo.json</div>
<svg style="left:669px;top:704.25px;" width="17" height="20.5" viewBox="0 0 17 20.500"><path d="M2.500 0h8.300L17 6.200v12.300a2 2 0 0 1-2 2H2.500a2 2 0 0 1-2-2V2a2 2 0 0 1 2-2z" fill="#8bc34a"/><path d="M10.300 1v6h6z" fill="#2e2e2e" opacity=".55"/><path d="M6.800 11.300l-2.600 2.700 2.600 2.700M10.200 11.300l2.600 2.700-2.600 2.700" fill="none" stroke="#26361a" stroke-width="1.500"/></svg>
<div style="left:699px;top:702.5px;height:25px;line-height:25px;font-size:19.5px;color:#cccccc;letter-spacing:-0.131px;">checkboxDemo.wxml</div>
<svg style="left:667px;top:739.0px;" width="21" height="19" viewBox="0 0 21 19"><path d="M3.500 0.500h17l-2.800 14.800-7.200 3.200-7.200-3.200-.9-4.300h3.800l.4 1.900 3.900 1.600 3.900-1.600.6-3.400H2.600l.8-3.600h12.300l.4-1.800H2.700z" fill="#42a5f5"/></svg>
<div style="left:699px;top:735.5px;height:25px;line-height:25px;font-size:19.5px;color:#cccccc;letter-spacing:-0.362px;">checkboxDemo.wxss</div>
<svg style="left:634.5px;top:773.5px;" width="9" height="14" viewBox="0 0 9 14"><path d="M1.500 1.800v10.400l5.800-5.200z" fill="#c4c4c4"/></svg>
<svg style="left:655.5px;top:771.5px;" width="22" height="18" viewBox="0 0 22 18"><path d="M1 2.500a1.500 1.500 0 0 1 1.500-1.500h5.800l2.200 2.500h9a1.500 1.500 0 0 1 1.500 1.500v10.500a1.500 1.500 0 0 1-1.500 1.500h-17A1.500 1.500 0 0 1 1 15.500z" fill="#90a4ae"/></svg>
<div style="left:687px;top:768.5px;height:25px;line-height:25px;font-size:19.5px;color:#cccccc;letter-spacing:-0.066px;">cloudDBDemo</div>
<svg style="left:634.5px;top:806.5px;" width="9" height="14" viewBox="0 0 9 14"><path d="M1.500 1.800v10.400l5.800-5.200z" fill="#c4c4c4"/></svg>
<svg style="left:655.5px;top:804.5px;" width="22" height="18" viewBox="0 0 22 18"><path d="M1 2.500a1.500 1.500 0 0 1 1.500-1.500h5.800l2.200 2.500h9a1.500 1.500 0 0 1 1.500 1.500v10.500a1.500 1.500 0 0 1-1.500 1.500h-17A1.500 1.500 0 0 1 1 15.500z" fill="#90a4ae"/></svg>
<div style="left:687px;top:801.5px;height:25px;line-height:25px;font-size:19.5px;color:#cccccc;letter-spacing:-0.108px;">cloudFunc</div>
<svg style="left:634.5px;top:839.5px;" width="9" height="14" viewBox="0 0 9 14"><path d="M1.500 1.800v10.400l5.800-5.200z" fill="#c4c4c4"/></svg>
<svg style="left:655.5px;top:837.5px;" width="22" height="18" viewBox="0 0 22 18"><path d="M1 2.500a1.500 1.500 0 0 1 1.500-1.500h5.800l2.200 2.500h9a1.500 1.500 0 0 1 1.500 1.500v10.500a1.500 1.500 0 0 1-1.500 1.500h-17A1.500 1.500 0 0 1 1 15.500z" fill="#90a4ae"/></svg>
<div style="left:687px;top:834.5px;height:25px;line-height:25px;font-size:19.5px;color:#cccccc;letter-spacing:0.004px;">cloudStorageDemo</div>
<svg style="left:634.5px;top:872.5px;" width="9" height="14" viewBox="0 0 9 14"><path d="M1.500 1.800v10.400l5.800-5.200z" fill="#c4c4c4"/></svg>
<svg style="left:655.5px;top:870.5px;" width="22" height="18" viewBox="0 0 22 18"><path d="M1 2.500a1.500 1.500 0 0 1 1.500-1.500h5.800l2.200 2.500h9a1.500 1.500 0 0 1 1.500 1.500v10.500a1.500 1.500 0 0 1-1.500 1.500h-17A1.500 1.500 0 0 1 1 15.500z" fill="#90a4ae"/></svg>
<div style="left:687px;top:867.5px;height:25px;line-height:25px;font-size:19.5px;color:#cccccc;letter-spacing:0.156px;">customComponent</div>
<svg style="left:634.5px;top:905.5px;" width="9" height="14" viewBox="0 0 9 14"><path d="M1.500 1.800v10.400l5.800-5.200z" fill="#c4c4c4"/></svg>
<svg style="left:655.5px;top:903.5px;" width="22" height="18" viewBox="0 0 22 18"><path d="M1 2.500a1.500 1.500 0 0 1 1.500-1.500h5.800l2.200 2.500h9a1.500 1.500 0 0 1 1.500 1.500v10.500a1.500 1.500 0 0 1-1.500 1.500h-17A1.500 1.500 0 0 1 1 15.500z" fill="#90a4ae"/></svg>
<div style="left:687px;top:900.5px;height:25px;line-height:25px;font-size:19.5px;color:#cccccc;letter-spacing:0.220px;">editorDemo</div>
<svg style="left:634.5px;top:938.5px;" width="9" height="14" viewBox="0 0 9 14"><path d="M1.500 1.800v10.400l5.800-5.200z" fill="#c4c4c4"/></svg>
<svg style="left:655.5px;top:936.5px;" width="22" height="18" viewBox="0 0 22 18"><path d="M1 2.500a1.500 1.500 0 0 1 1.500-1.500h5.800l2.200 2.500h9a1.500 1.500 0 0 1 1.500 1.500v10.500a1.500 1.500 0 0 1-1.500 1.500h-17A1.500 1.500 0 0 1 1 15.500z" fill="#90a4ae"/></svg>
<div style="left:687px;top:933.5px;height:25px;line-height:25px;font-size:19.5px;color:#cccccc;letter-spacing:0.307px;">fontDemo</div>
<svg style="left:634.5px;top:971.5px;" width="9" height="14" viewBox="0 0 9 14"><path d="M1.500 1.800v10.400l5.800-5.200z" fill="#c4c4c4"/></svg>
<svg style="left:655.5px;top:969.5px;" width="22" height="18" viewBox="0 0 22 18"><path d="M1 2.500a1.500 1.500 0 0 1 1.500-1.500h5.800l2.200 2.500h9a1.500 1.500 0 0 1 1.500 1.500v10.500a1.500 1.500 0 0 1-1.500 1.500h-17A1.500 1.500 0 0 1 1 15.500z" fill="#90a4ae"/></svg>
<div style="left:687px;top:966.5px;height:25px;line-height:25px;font-size:19.5px;color:#cccccc;letter-spacing:0.026px;">iconDemo</div>
<svg style="left:634.5px;top:1004.5px;" width="9" height="14" viewBox="0 0 9 14"><path d="M1.500 1.800v10.400l5.800-5.200z" fill="#c4c4c4"/></svg>
<svg style="left:655.5px;top:1002.5px;" width="22" height="18" viewBox="0 0 22 18"><path d="M1 2.500a1.500 1.500 0 0 1 1.500-1.500h5.800l2.200 2.500h9a1.500 1.500 0 0 1 1.500 1.500v10.500a1.500 1.500 0 0 1-1.500 1.500h-17A1.500 1.500 0 0 1 1 15.500z" fill="#90a4ae"/></svg>
<div style="left:687px;top:999.5px;height:25px;line-height:25px;font-size:19.5px;color:#cccccc;letter-spacing:-0.014px;">imageDemo</div>
<svg style="left:634.5px;top:1037.5px;" width="9" height="14" viewBox="0 0 9 14"><path d="M1.500 1.800v10.400l5.800-5.200z" fill="#c4c4c4"/></svg>
<svg style="left:655.5px;top:1035.5px;" width="22" height="18" viewBox="0 0 22 18"><path d="M1 2.500a1.500 1.500 0 0 1 1.500-1.500h5.800l2.200 2.500h9a1.500 1.500 0 0 1 1.500 1.500v10.500a1.500 1.500 0 0 1-1.500 1.500h-17A1.500 1.500 0 0 1 1 15.500z" fill="#90a4ae"/></svg>
<div style="left:687px;top:1032.5px;height:25px;line-height:25px;font-size:19.5px;color:#cccccc;letter-spacing:0.076px;">index</div>
<svg style="left:634.5px;top:1070.5px;" width="9" height="14" viewBox="0 0 9 14"><path d="M1.500 1.800v10.400l5.800-5.200z" fill="#c4c4c4"/></svg>
<svg style="left:655.5px;top:1068.5px;" width="22" height="18" viewBox="0 0 22 18"><path d="M1 2.500a1.500 1.500 0 0 1 1.500-1.500h5.800l2.200 2.500h9a1.500 1.500 0 0 1 1.500 1.500v10.500a1.500 1.500 0 0 1-1.500 1.500h-17A1.500 1.500 0 0 1 1 15.500z" fill="#90a4ae"/></svg>
<div style="left:687px;top:1065.5px;height:25px;line-height:25px;font-size:19.5px;color:#cccccc;letter-spacing:0.300px;">inputDemo</div>
<svg style="left:634.5px;top:1103.5px;" width="9" height="14" viewBox="0 0 9 14"><path d="M1.500 1.800v10.400l5.800-5.200z" fill="#c4c4c4"/></svg>
<svg style="left:655.5px;top:1101.5px;" width="22" height="18" viewBox="0 0 22 18"><path d="M1 2.500a1.500 1.500 0 0 1 1.500-1.500h5.800l2.200 2.500h9a1.500 1.500 0 0 1 1.500 1.500v10.500a1.500 1.500 0 0 1-1.500 1.500h-17A1.500 1.500 0 0 1 1 15.500z" fill="#90a4ae"/></svg>
<div style="left:687px;top:1098.5px;height:25px;line-height:25px;font-size:19.5px;color:#cccccc;letter-spacing:0.198px;">loginDemo</div>
<svg style="left:634.5px;top:1136.5px;" width="9" height="14" viewBox="0 0 9 14"><path d="M1.500 1.800v10.400l5.800-5.200z" fill="#c4c4c4"/></svg>
<svg style="left:655.5px;top:1134.5px;" width="22" height="18" viewBox="0 0 22 18"><path d="M1 2.500a1.500 1.500 0 0 1 1.500-1.500h5.800l2.200 2.500h9a1.500 1.500 0 0 1 1.500 1.500v10.500a1.500 1.500 0 0 1-1.500 1.500h-17A1.500 1.500 0 0 1 1 15.500z" fill="#90a4ae"/></svg>
<div style="left:687px;top:1131.5px;height:25px;line-height:25px;font-size:19.5px;color:#cccccc;letter-spacing:0.007px;">mapDemo</div>
<svg style="left:634.5px;top:1169.5px;" width="9" height="14" viewBox="0 0 9 14"><path d="M1.500 1.800v10.400l5.800-5.200z" fill="#c4c4c4"/></svg>
<svg style="left:655.5px;top:1167.5px;" width="22" height="18" viewBox="0 0 22 18"><path d="M1 2.500a1.500 1.500 0 0 1 1.500-1.500h5.800l2.200 2.500h9a1.500 1.500 0 0 1 1.500 1.500v10.500a1.500 1.500 0 0 1-1.500 1.500h-17A1.500 1.500 0 0 1 1 15.500z" fill="#90a4ae"/></svg>
<div style="left:687px;top:1164.5px;height:25px;line-height:25px;font-size:19.5px;color:#cccccc;letter-spacing:-0.013px;">matchDemo</div>
<svg style="left:634.5px;top:1202.5px;" width="9" height="14" viewBox="0 0 9 14"><path d="M1.500 1.800v10.400l5.800-5.200z" fill="#c4c4c4"/></svg>
<svg style="left:655.5px;top:1200.5px;" width="22" height="18" viewBox="0 0 22 18"><path d="M1 2.500a1.500 1.500 0 0 1 1.500-1.500h5.800l2.200 2.500h9a1.500 1.500 0 0 1 1.500 1.500v10.500a1.500 1.500 0 0 1-1.500 1.500h-17A1.500 1.500 0 0 1 1 15.500z" fill="#90a4ae"/></svg>
<div style="left:687px;top:1197.5px;height:25px;line-height:25px;font-size:19.5px;color:#cccccc;letter-spacing:-0.048px;">moveableDemo</div>
<div style="left:591px;top:1221px;width:318px;height:26px;background:#383838;"></div>
<svg style="left:602px;top:1230px;" width="12" height="16" viewBox="0 0 12 16"><path d="M2.500 2.500v11l6-5.500z" fill="#c4c4c4"/></svg>
<div class="b" style="left:621px;top:1227px;height:21px;line-height:21px;font-size:16.5px;color:#cccccc;width:33px;">大纲</div>
<div style="left:909px;top:183px;width:1px;height:1064px;background:#2b2b2b;"></div>
<svg style="left:612px;top:1256px;" width="24" height="24" viewBox="0 0 24 24"><circle cx="12" cy="12" r="8.500" fill="none" stroke="#b4b4b4" stroke-width="1.300"/><path d="M8.300 8.300l7.400 7.400M15.700 8.300l-7.400 7.400" stroke="#b4b4b4" stroke-width="1.300"/></svg>
<div style="left:639px;top:1256px;height:24px;line-height:24px;font-size:18.5px;color:#b4b4b4;">0</div>
<svg style="left:653px;top:1256px;" width="24" height="24" viewBox="0 0 24 24"><path d="M12 3.200L20.800 18.800H3.200z" fill="none" stroke="#b4b4b4" stroke-width="1.300" stroke-linejoin="round"/><path d="M12 8.800v5.200M12 15.600v1.600" stroke="#b4b4b4" stroke-width="1.500"/></svg>
<div style="left:680px;top:1256px;height:24px;line-height:24px;font-size:18.5px;color:#b4b4b4;">0</div>
<div style="left:1172px;top:138px;width:1px;height:45px;background:#2a2a2a;"></div>
<div style="left:1429px;top:138px;width:1px;height:45px;background:#2a2a2a;"></div>
<div style="left:1654px;top:138px;width:1px;height:45px;background:#2a2a2a;"></div>
<div style="left:1655px;top:138px;width:266px;height:46px;background:#2e2e2e;"></div>
<div style="left:1921px;top:138px;width:1px;height:45px;background:#2a2a2a;"></div>
<svg style="left:930px;top:150.75px;" width="17" height="20.5" viewBox="0 0 17 20.500"><path d="M2.500 0h8.300L17 6.200v12.300a2 2 0 0 1-2 2H2.500a2 2 0 0 1-2-2V2a2 2 0 0 1 2-2z" fill="#8bc34a"/><path d="M10.300 1v6h6z" fill="#2e2e2e" opacity=".55"/><path d="M6.800 11.300l-2.600 2.700 2.600 2.700M10.200 11.300l2.600 2.700-2.600 2.700" fill="none" stroke="#26361a" stroke-width="1.500"/></svg>
<div style="left:959px;top:148.5px;height:25px;line-height:25px;font-size:19.5px;color:#a2a2a2;letter-spacing:0.055px;">positionDemo.wxml</div>
<svg style="left:1190px;top:152.0px;" width="21" height="19" viewBox="0 0 21 19"><path d="M3.500 0.500h17l-2.800 14.800-7.200 3.200-7.200-3.200-.9-4.300h3.800l.4 1.900 3.900 1.600 3.900-1.600.6-3.400H2.600l.8-3.600h12.300l.4-1.800H2.700z" fill="#42a5f5"/></svg>
<div style="left:1221px;top:148.5px;height:25px;line-height:25px;font-size:19.5px;color:#a2a2a2;letter-spacing:-0.117px;">positionDemo.wxss</div>
<svg style="left:1449px;top:150.75px;" width="17" height="20.5" viewBox="0 0 17 20.500"><path d="M2.500 0h8.300L17 6.200v12.300a2 2 0 0 1-2 2H2.500a2 2 0 0 1-2-2V2a2 2 0 0 1 2-2z" fill="#8bc34a"/><path d="M10.300 1v6h6z" fill="#2e2e2e" opacity=".55"/><path d="M6.800 11.300l-2.600 2.700 2.600 2.700M10.200 11.300l2.600 2.700-2.600 2.700" fill="none" stroke="#26361a" stroke-width="1.500"/></svg>
<div style="left:1478px;top:148.5px;height:25px;line-height:25px;font-size:19.5px;color:#a2a2a2;letter-spacing:-0.021px;">textDemo.wxml</div>
<svg style="left:1673px;top:151.66px;" width="16.32" height="19.68" viewBox="0 0 17 20.500"><path d="M2.500 0h8.300L17 6.200v12.300a2 2 0 0 1-2 2H2.500a2 2 0 0 1-2-2V2a2 2 0 0 1 2-2z" fill="#8bc34a"/><path d="M10.300 1v6h6z" fill="#2e2e2e" opacity=".55"/><path d="M6.800 11.300l-2.600 2.700 2.600 2.700M10.200 11.300l2.600 2.700-2.600 2.700" fill="none" stroke="#26361a" stroke-width="1.500"/></svg>
<div class="i" style="left:1702px;top:148.5px;height:25px;line-height:25px;font-size:19.5px;color:#ffffff;letter-spacing:-0.484px;">checkboxDemo.wxml</div>
<svg style="left:1887px;top:151px;" width="20" height="20" viewBox="0 0 20 20"><path d="M3.500 3.500l13 13M16.500 3.500l-13 13" stroke="#ffffff" stroke-width="1.700"/></svg>
<svg style="left:2021px;top:149px;" width="24" height="24" viewBox="0 0 24 24"><rect x="3" y="3" width="17.500" height="17.500" rx="1.500" fill="none" stroke="#d4d4d4" stroke-width="1.700"/><path d="M11.750 3v17.500" stroke="#d4d4d4" stroke-width="1.700"/></svg>
<svg style="left:2068px;top:156px;" width="26" height="10" viewBox="0 0 26 10"><circle cx="3.500" cy="5" r="1.600" fill="#d4d4d4"/><circle cx="12.500" cy="5" r="1.600" fill="#d4d4d4"/><circle cx="21.500" cy="5" r="1.600" fill="#d4d4d4"/></svg>
<svg style="left:921px;top:190px;" width="24" height="20" viewBox="0 0 24 20"><path d="M6.500 3.500h16M6.500 8h16M6.500 12.500h16M6.500 17h16" stroke="#c8c8c8" stroke-width="1.500"/><path d="M1.500 3.500h2.300M1.500 8h2.300M1.500 12.500h2.300M1.500 17h2.300" stroke="#c8c8c8" stroke-width="1.500"/></svg>
<svg style="left:968px;top:188px;" width="20" height="24" viewBox="0 0 20 24"><path d="M3 2h13.500v19l-6.750-6.500L3 21z" fill="none" stroke="#c8c8c8" stroke-width="1.700"/></svg>
<svg style="left:1012px;top:190px;" width="22" height="20" viewBox="0 0 22 20"><path d="M20.500 10H3M10 2.500L2.500 10l7.500 7.500" fill="none" stroke="#c8c8c8" stroke-width="1.600"/></svg>
<svg style="left:1055px;top:190px;" width="22" height="20" viewBox="0 0 22 20"><path d="M1.500 10H19M12 2.500l7.500 7.500-7.500 7.500" fill="none" stroke="#5a5a5a" stroke-width="1.600"/></svg>
<div style="left:1100px;top:188px;height:25px;line-height:25px;font-size:19.5px;color:#a0a0a0;letter-spacing:-0.626px;">pages</div>
<svg style="left:1159px;top:192px;" width="10" height="16" viewBox="0 0 10 16"><path d="M1.500 1.500l7 6.500-7 6.500" fill="none" stroke="#a0a0a0" stroke-width="1.400"/></svg>
<div style="left:1176px;top:188px;height:25px;line-height:25px;font-size:19.5px;color:#a0a0a0;letter-spacing:-0.283px;">checkboxDemo</div>
<svg style="left:1316px;top:192px;" width="10" height="16" viewBox="0 0 10 16"><path d="M1.500 1.500l7 6.500-7 6.500" fill="none" stroke="#a0a0a0" stroke-width="1.400"/></svg>
<svg style="left:1336px;top:190.2625px;" width="16.15" height="19.475" viewBox="0 0 17 20.500"><path d="M2.500 0h8.300L17 6.200v12.300a2 2 0 0 1-2 2H2.500a2 2 0 0 1-2-2V2a2 2 0 0 1 2-2z" fill="#8bc34a"/><path d="M10.300 1v6h6z" fill="#2e2e2e" opacity=".55"/><path d="M6.800 11.300l-2.600 2.700 2.600 2.700M10.200 11.300l2.600 2.700-2.600 2.700" fill="none" stroke="#26361a" stroke-width="1.500"/></svg>
<div style="left:1365px;top:188px;height:25px;line-height:25px;font-size:19.5px;color:#c4c4c4;letter-spacing:-0.190px;">checkboxDemo.wxml</div>
<svg style="left:1554px;top:192px;" width="10" height="16" viewBox="0 0 10 16"><path d="M1.500 1.500l7 6.500-7 6.500" fill="none" stroke="#a0a0a0" stroke-width="1.400"/></svg>
<div style="left:1571px;top:188px;height:25px;line-height:25px;font-size:19.5px;color:#a0a0a0;letter-spacing:-1.084px;">...</div>
<div class="m" style="left:920px;top:217px;height:28px;line-height:28px;font-size:19.2px;color:#6c6c6c;width:25px;text-align:right;">1</div>
<div class="m" style="left:985px;top:217px;height:28px;line-height:28px;font-size:19.2px;color:#dcdcdc;letter-spacing:0.008px;white-space:pre;"><span style="color:#5ec15e">&lt;!--pages/checkboxDemo/checkboxDemo.wxml--&gt;</span></div>
<div class="m" style="left:920px;top:245.5px;height:28px;line-height:28px;font-size:19.2px;color:#6c6c6c;width:25px;text-align:right;">2</div>
<div class="m" style="left:985px;top:245.5px;height:28px;line-height:28px;font-size:19.2px;color:#dcdcdc;letter-spacing:0.008px;white-space:pre;"><span style="color:#69b8f6">&lt;checkbox-group</span><span style="color:#d4d4d4"> bindchange=</span><span style="color:#d4d4d4">&quot;</span><span style="color:#f9705f">change</span><span style="color:#d4d4d4">&quot;</span><span style="color:#69b8f6">&gt;</span></div>
<div class="m" style="left:920px;top:274px;height:28px;line-height:28px;font-size:19.2px;color:#6c6c6c;width:25px;text-align:right;">3</div>
<div class="m" style="left:985px;top:274px;height:28px;line-height:28px;font-size:19.2px;color:#dcdcdc;letter-spacing:0.008px;white-space:pre;">    <span style="color:#69b8f6">&lt;checkbox</span><span style="color:#d4d4d4"> value=&quot;</span><span class="cj" style="width:42.8px;color:#f9705f">足球</span><span style="color:#d4d4d4">&quot;</span><span style="color:#69b8f6">&gt;&lt;/checkbox&gt;</span><span class="cj" style="width:42.8px;color:#dcdcdc">足球</span></div>
<div class="m" style="left:920px;top:302.5px;height:28px;line-height:28px;font-size:19.2px;color:#6c6c6c;width:25px;text-align:right;">4</div>
<div class="m" style="left:985px;top:302.5px;height:28px;line-height:28px;font-size:19.2px;color:#dcdcdc;letter-spacing:0.008px;white-space:pre;">    <span style="color:#69b8f6">&lt;checkbox</span><span style="color:#d4d4d4"> value=&quot;</span><span class="cj" style="width:42.8px;color:#f9705f">篮球</span><span style="color:#d4d4d4">&quot;</span><span style="color:#69b8f6">&gt;&lt;/checkbox&gt;</span><span class="cj" style="width:42.8px;color:#dcdcdc">篮球</span></div>
<div class="m" style="left:920px;top:331px;height:28px;line-height:28px;font-size:19.2px;color:#6c6c6c;width:25px;text-align:right;">5</div>
<div class="m" style="left:985px;top:331px;height:28px;line-height:28px;font-size:19.2px;color:#dcdcdc;letter-spacing:0.008px;white-space:pre;">    <span style="color:#69b8f6">&lt;checkbox</span><span style="color:#d4d4d4"> value=&quot;</span><span class="cj" style="width:64.2px;color:#f9705f">乒乓球</span><span style="color:#d4d4d4">&quot;</span><span style="color:#69b8f6">&gt;&lt;/checkbox&gt;</span><span class="cj" style="width:64.2px;color:#dcdcdc">乒乓球</span></div>
<div class="m" style="left:920px;top:359.5px;height:28px;line-height:28px;font-size:19.2px;color:#6c6c6c;width:25px;text-align:right;">6</div>
<div class="m" style="left:985px;top:359.5px;height:28px;line-height:28px;font-size:19.2px;color:#dcdcdc;letter-spacing:0.008px;white-space:pre;"><span style="color:#69b8f6">&lt;/checkbox-group&gt;</span></div>
<div class="m" style="left:920px;top:388px;height:28px;line-height:28px;font-size:19.2px;color:#6c6c6c;width:25px;text-align:right;">7</div>
<svg style="left:957px;top:253px;" width="16" height="12" viewBox="0 0 16 12"><path d="M1.500 2.500L8 9.500l6.500-7" fill="none" stroke="#c8c8c8" stroke-width="1.500"/></svg>
<div style="left:985px;top:273px;width:1px;height:86px;background:#4b4b4b;"></div>
<div style="left:1008px;top:273px;width:1px;height:86px;background:#4b4b4b;"></div>
<div style="left:2006px;top:216px;width:43px;height:1px;background:#4c9a4c;opacity:.75;"></div>
<div style="left:2006px;top:218px;width:15px;height:1px;background:#4a84b5;opacity:.75;"></div>
<div style="left:2022px;top:218px;width:12px;height:1px;background:#9a9a9a;opacity:.75;"></div>
<div style="left:2034px;top:218px;width:6px;height:1px;background:#c0574c;opacity:.75;"></div>
<div style="left:2040px;top:218px;width:2px;height:1px;background:#4a84b5;opacity:.75;"></div>
<div style="left:2010px;top:220px;width:9px;height:1px;background:#4a84b5;opacity:.75;"></div>
<div style="left:2020px;top:220px;width:7px;height:1px;background:#9a9a9a;opacity:.75;"></div>
<div style="left:2027px;top:220px;width:4px;height:1px;background:#c0574c;opacity:.75;"></div>
<div style="left:2032px;top:220px;width:12px;height:1px;background:#4a84b5;opacity:.75;"></div>
<div style="left:2044px;top:220px;width:4px;height:1px;background:#b0b0b0;opacity:.75;"></div>
<div style="left:2010px;top:222px;width:9px;height:1px;background:#4a84b5;opacity:.75;"></div>
<div style="left:2020px;top:222px;width:7px;height:1px;background:#9a9a9a;opacity:.75;"></div>
<div style="left:2027px;top:222px;width:4px;height:1px;background:#c0574c;opacity:.75;"></div>
<div style="left:2032px;top:222px;width:12px;height:1px;background:#4a84b5;opacity:.75;"></div>
<div style="left:2044px;top:222px;width:4px;height:1px;background:#b0b0b0;opacity:.75;"></div>
<div style="left:2010px;top:224px;width:9px;height:1px;background:#4a84b5;opacity:.75;"></div>
<div style="left:2020px;top:224px;width:7px;height:1px;background:#9a9a9a;opacity:.75;"></div>
<div style="left:2027px;top:224px;width:6px;height:1px;background:#c0574c;opacity:.75;"></div>
<div style="left:2034px;top:224px;width:12px;height:1px;background:#4a84b5;opacity:.75;"></div>
<div style="left:2046px;top:224px;width:6px;height:1px;background:#b0b0b0;opacity:.75;"></div>
<div style="left:2006px;top:226px;width:17px;height:1px;background:#4a84b5;opacity:.75;"></div>
<div style="left:2099px;top:216px;width:22px;height:1px;background:#474747;"></div>
<div style="left:2099px;top:217px;width:1px;height:674px;background:#474747;"></div>
<div style="left:2107.5px;top:583px;width:9px;height:73px;background:#3e4a54;border-radius:4.500px 4.500px 0 0;"></div>
<div style="left:2110.2px;top:610px;width:3.6px;height:46px;background:#2ea9ea;"></div>
<div style="left:2103px;top:647px;width:18px;height:18px;background:#3b4a55;border-radius:9px;"></div>
<div style="left:2105.5px;top:649.5px;width:13px;height:13px;background:#38b6e8;border-radius:7px;"></div>
<div style="left:910px;top:891px;width:1211px;height:44px;background:#333333;"></div>
<div style="left:910px;top:891px;width:1211px;height:1px;background:#454545;"></div>
<div style="left:941px;top:903.5px;height:21px;line-height:21px;font-size:16.5px;color:#9c9c9c;width:33px;">构建</div>
<div style="left:1004px;top:903.5px;height:21px;line-height:21px;font-size:16.5px;color:#ffffff;width:50px;">调试器</div>
<div style="left:1004px;top:933px;width:50px;height:1px;background:#e8e8e8;"></div>
<div style="left:1083px;top:903.5px;height:21px;line-height:21px;font-size:16.5px;color:#9c9c9c;width:33px;">问题</div>
<div style="left:1146px;top:903.5px;height:21px;line-height:21px;font-size:16.5px;color:#9c9c9c;width:33px;">输出</div>
<div style="left:1209px;top:903.5px;height:21px;line-height:21px;font-size:16.5px;color:#9c9c9c;width:33px;">终端</div>
<div style="left:1272px;top:903.5px;height:21px;line-height:21px;font-size:16.5px;color:#9c9c9c;width:66px;">代码质量</div>
<svg style="left:2022px;top:907px;" width="22" height="18" viewBox="0 0 22 18"><path d="M2.500 13.500L11 5l8.500 8.500" fill="none" stroke="#e0e0e0" stroke-width="1.700"/></svg>
<svg style="left:2071px;top:907px;" width="20" height="20" viewBox="0 0 20 20"><path d="M3 3l14 14M17 3L3 17" stroke="#e0e0e0" stroke-width="1.700"/></svg>
<div style="left:910px;top:935px;width:1211px;height:40px;background:#292a2d;"></div>
<div style="left:910px;top:975px;width:1211px;height:1px;background:#3d3d3d;"></div>
<div style="left:910px;top:976px;width:1211px;height:39px;background:#292a2d;"></div>
<div style="left:910px;top:1015px;width:1211px;height:1px;background:#454545;"></div>
<div style="left:910px;top:1016px;width:1211px;height:231px;background:#242424;"></div>
<svg style="left:924px;top:943px;" width="26" height="26" viewBox="0 0 26 26"><path d="M21 10V4.500a1.500 1.500 0 0 0-1.500-1.500h-15A1.500 1.500 0 0 0 3 4.500v15A1.500 1.500 0 0 0 4.500 21H10" fill="none" stroke="#9c9c9c" stroke-width="1.700"/><path d="M11.500 11.500l3.500 11 2.300-4.300 4.700 4.700 1.500-1.500-4.700-4.700 4.300-2.300z" fill="#9c9c9c"/></svg>
<div style="left:962.5px;top:945px;width:1.5px;height:22px;background:#47484b;"></div>
<div style="left:1054px;top:935px;width:99px;height:40px;background:#000000;"></div>
<div style="left:990px;top:943.5px;height:24px;line-height:24px;font-size:18.2px;color:#e8eaed;letter-spacing:-0.121px;">Wxml</div>
<div style="left:1071px;top:943.5px;height:24px;line-height:24px;font-size:18.2px;color:#ffffff;letter-spacing:-0.539px;">Console</div>
<div style="left:1170px;top:943.5px;height:24px;line-height:24px;font-size:18.2px;color:#e8eaed;letter-spacing:-0.824px;">Sources</div>
<div style="left:1268px;top:943.5px;height:24px;line-height:24px;font-size:18.2px;color:#e8eaed;letter-spacing:0.036px;">Network</div>
<div style="left:1371px;top:943.5px;height:24px;line-height:24px;font-size:18.2px;color:#e8eaed;letter-spacing:-0.381px;">Performance</div>
<div style="left:1506px;top:943.5px;height:24px;line-height:24px;font-size:18.2px;color:#e8eaed;letter-spacing:0.046px;">Memory</div>
<div style="left:1608px;top:943.5px;height:24px;line-height:24px;font-size:18.2px;color:#e8eaed;letter-spacing:-0.261px;">AppData</div>
<div style="left:1713px;top:943.5px;height:24px;line-height:24px;font-size:18.2px;color:#e8eaed;letter-spacing:-0.392px;">Storage</div>
<div style="left:1809px;top:943.5px;height:24px;line-height:24px;font-size:18.2px;color:#e8eaed;letter-spacing:-0.343px;">Security</div>
<svg style="left:1915px;top:947px;" width="18" height="16" viewBox="0 0 18 16"><path d="M2.500 2.500L8 8l-5.500 5.500M9.500 2.500L15 8l-5.500 5.500" fill="none" stroke="#b8b8b8" stroke-width="1.700"/></svg>
<div style="left:1984.5px;top:945px;width:1.5px;height:22px;background:#47484b;"></div>
<svg style="left:1999px;top:942.5px;" width="26" height="26" viewBox="0 0 26 26"><path d="M12 1.600l1.900.2.700 2.700 1.700.7 2.400-1.400 2.700 2.700-1.400 2.400.7 1.700 2.700.700v3.800l-2.700.700-.7 1.700 1.400 2.400-2.700 2.700-2.400-1.400-1.700.7-.7 2.700h-3.800l-.7-2.700-1.700-.7-2.400 1.400-2.700-2.700 1.400-2.400-.7-1.700-2.700-.700v-3.800l2.700-.700.7-1.700-1.400-2.400 2.700-2.700 2.400 1.400 1.700-.7.700-2.700z" fill="#b8b8b8" transform="translate(1 .4)"/><circle cx="13" cy="13" r="3.700" fill="#292a2d"/></svg>
<svg style="left:2050px;top:943px;" width="8" height="26" viewBox="0 0 8 26"><circle cx="4" cy="4" r="1.900" fill="#b8b8b8"/><circle cx="4" cy="12.500" r="1.900" fill="#b8b8b8"/><circle cx="4" cy="21" r="1.900" fill="#b8b8b8"/></svg>
<svg style="left:2082px;top:943px;" width="28" height="24" viewBox="0 0 28 24"><path d="M8 3h17v13H8zM10.500 5.500v8h12v-8z" fill="#9c9c9c" fill-rule="evenodd"/><path d="M2 9h3.500v10.500H19V22H2z" fill="#9c9c9c"/></svg>
<svg style="left:921px;top:984px;" width="26" height="24" viewBox="0 0 26 24"><rect x="1.500" y="2.500" width="22" height="18" fill="none" stroke="#9c9c9c" stroke-width="1.600"/><path d="M8 2.500v18" stroke="#9c9c9c" stroke-width="1.600"/><path d="M12.500 7l6.500 4.500-6.500 4.500z" fill="#9c9c9c"/></svg>
<svg style="left:966px;top:984px;" width="24" height="24" viewBox="0 0 24 24"><circle cx="12" cy="12" r="8.500" fill="none" stroke="#9c9c9c" stroke-width="2.700"/><path d="M6 6l12 12" stroke="#9c9c9c" stroke-width="2.700"/></svg>
<div style="left:1004.5px;top:981px;width:1.5px;height:29px;background:#47484b;"></div>
<div style="left:1019px;top:983.5px;height:24px;line-height:24px;font-size:18.2px;color:#e8eaed;letter-spacing:0.567px;">top</div>
<svg style="left:1199px;top:990px;" width="14" height="11" viewBox="0 0 14 11"><path d="M1.500 1.500h11L7 10z" fill="#9c9c9c"/></svg>
<div style="left:1224.5px;top:981px;width:1.5px;height:29px;background:#47484b;"></div>
<svg style="left:1239px;top:984px;" width="28" height="24" viewBox="0 0 28 24"><path d="M1.500 12c3-5.200 7.200-7.500 12.500-7.500S23.500 6.800 26.500 12c-3 5.200-7.200 7.500-12.500 7.500S4.500 17.200 1.500 12z" fill="#9c9c9c"/><circle cx="14" cy="12" r="5" fill="#292a2d"/><circle cx="14" cy="12" r="2.400" fill="#9c9c9c"/></svg>
<div style="left:1280.5px;top:981px;width:1.5px;height:29px;background:#47484b;"></div>
<div style="left:1291px;top:980px;width:270px;height:30px;background:#202124;border:1px solid #5a5d61;"></div>
<div style="left:1298px;top:984px;height:24px;line-height:24px;font-size:18.2px;color:#c4c7cc;letter-spacing:-0.241px;">Filter</div>
<div style="left:1573px;top:983.5px;height:24px;line-height:24px;font-size:18.2px;color:#e8eaed;letter-spacing:-0.232px;">Default levels</div>
<svg style="left:1685px;top:990px;" width="14" height="11" viewBox="0 0 14 11"><path d="M1.500 1.500h11L7 10z" fill="#9c9c9c"/></svg>
<div style="left:2068.5px;top:981px;width:1.5px;height:29px;background:#47484b;"></div>
<svg style="left:2083px;top:982.5px;" width="26" height="26" viewBox="0 0 26 26"><path d="M12 1.600l1.900.2.700 2.700 1.700.7 2.400-1.400 2.700 2.700-1.400 2.400.7 1.700 2.700.700v3.800l-2.700.700-.7 1.700 1.400 2.400-2.700 2.700-2.400-1.400-1.700.7-.7 2.700h-3.800l-.7-2.700-1.700-.7-2.400 1.400-2.700-2.700 1.400-2.400-.7-1.700-2.700-.700v-3.800l2.700-.700.7-1.700-1.400-2.400 2.700-2.700 2.400 1.400 1.700-.7.700-2.700z" fill="#b8b8b8" transform="translate(1 .4)"/><circle cx="13" cy="13" r="3.700" fill="#292a2d"/></svg>
<div style="left:910px;top:1049px;width:1211px;height:1px;background:#3a3a3a;"></div>
<div style="left:910px;top:1082px;width:1211px;height:1px;background:#3a3a3a;"></div>
<div style="left:910px;top:1114px;width:1211px;height:1px;background:#3a3a3a;"></div>
<svg style="left:949px;top:1026px;" width="10" height="14" viewBox="0 0 10 14"><path d="M1.500 1.500v11l7-5.500z" fill="#9c9c9c"/></svg>
<div class="m i" style="left:963.5px;top:1022px;height:24px;line-height:24px;font-size:16.5px;color:#e0e0e0;letter-spacing:-0.002px;white-space:pre;">[<span style="color:#e8a06a">"<span class="cj2" style="width:35.8px;">篮球</span>"</span>]</div>
<div class="m" style="left:1840px;top:1021.5px;height:24px;line-height:24px;font-size:16.5px;color:#d6d6d6;letter-spacing:-0.002px;white-space:pre;text-decoration:underline;text-underline-offset:2px;">checkboxDemo.js? [sm]:11</div>
<svg style="left:949px;top:1059px;" width="10" height="14" viewBox="0 0 10 14"><path d="M1.500 1.500v11l7-5.500z" fill="#9c9c9c"/></svg>
<div class="m i" style="left:963.5px;top:1055px;height:24px;line-height:24px;font-size:16.5px;color:#e0e0e0;letter-spacing:-0.002px;white-space:pre;">(2) [<span style="color:#e8a06a">"<span class="cj2" style="width:35.8px;">篮球</span>"</span>, <span style="color:#e8a06a">"<span class="cj2" style="width:53.7px;">乒乓球</span>"</span>]</div>
<div class="m" style="left:1840px;top:1054.5px;height:24px;line-height:24px;font-size:16.5px;color:#d6d6d6;letter-spacing:-0.002px;white-space:pre;text-decoration:underline;text-underline-offset:2px;">checkboxDemo.js? [sm]:11</div>
<svg style="left:949px;top:1092px;" width="10" height="14" viewBox="0 0 10 14"><path d="M1.500 1.500v11l7-5.500z" fill="#9c9c9c"/></svg>
<div class="m i" style="left:963.5px;top:1088px;height:24px;line-height:24px;font-size:16.5px;color:#e0e0e0;letter-spacing:-0.002px;white-space:pre;">(3) [<span style="color:#e8a06a">"<span class="cj2" style="width:35.8px;">篮球</span>"</span>, <span style="color:#e8a06a">"<span class="cj2" style="width:53.7px;">乒乓球</span>"</span>, <span style="color:#e8a06a">"<span class="cj2" style="width:35.8px;">足球</span>"</span>]</div>
<div class="m" style="left:1840px;top:1087.5px;height:24px;line-height:24px;font-size:16.5px;color:#d6d6d6;letter-spacing:-0.002px;white-space:pre;text-decoration:underline;text-underline-offset:2px;">checkboxDemo.js? [sm]:11</div>
<svg style="left:924px;top:1123px;" width="12" height="16" viewBox="0 0 12 16"><path d="M2.500 2.500L9 8l-6.500 5.500" fill="none" stroke="#3b82f6" stroke-width="2"/></svg>
<div style="left:2108.5px;top:1148px;width:9px;height:73px;background:#3e4a54;border-radius:4.500px 4.500px 0 0;"></div>
<div style="left:2111.2px;top:1175px;width:3.6px;height:46px;background:#2ea9ea;"></div>
<div style="left:2104px;top:1212px;width:18px;height:18px;background:#3b4a55;border-radius:9px;"></div>
<div style="left:2106.5px;top:1214.5px;width:13px;height:13px;background:#38b6e8;border-radius:7px;"></div>
<div style="left:1757px;top:1256px;height:24px;line-height:24px;font-size:18.5px;color:#a4a4a4;width:84px;letter-spacing:-0.500px;">行 1，列 1</div>
<div style="left:1864px;top:1256.5px;height:23px;line-height:23px;font-size:18px;color:#a4a4a4;width:56px;letter-spacing:-0.3px;">空格: 2</div>
<div style="left:1943px;top:1256px;height:24px;line-height:24px;font-size:18.5px;color:#a4a4a4;letter-spacing:-1.082px;">UTF-8</div>
<div style="left:2015px;top:1256px;height:24px;line-height:24px;font-size:18.5px;color:#a4a4a4;letter-spacing:-2.795px;">LF</div>
<div style="left:2056px;top:1256px;height:24px;line-height:24px;font-size:18.5px;color:#a4a4a4;letter-spacing:-0.875px;">WXML</div>
<svg style="left:28px;top:1300px;" width="44" height="44" viewBox="0 0 44 44"><defs><linearGradient id="cl" x1="0" y1="0" x2="0" y2="1"><stop offset="0" stop-color="#e8f0ff"/><stop offset=".7" stop-color="#b9cdf2"/><stop offset="1" stop-color="#6f94dc"/></linearGradient></defs>
<path d="M17 5C25 12 17 27 2.200 19C9 19.500 15 14 17 5z" fill="#f39c1f"/><path d="M17 5C21 11 17 20 9 21C14 17.500 16.500 12 17 5z" fill="#f9bf3b"/>
<path d="M9.500 39.500a7.500 7.500 0 0 1-1-14.900 9.500 9.500 0 0 1 17.500-2.100 8.700 8.700 0 0 1 4.500 17z" fill="url(#cl)"/></svg>
<div style="left:46.5px;top:1297px;width:24px;height:24px;background:#ff9aa9;border-radius:12px;"></div>
<div style="left:54.5px;top:1299px;height:20px;line-height:20px;font-size:15.5px;color:#111;">1</div>
<div style="left:77.5px;top:1299.5px;height:23px;line-height:23px;font-size:17.5px;color:#ffffff;letter-spacing:-0.525px;">22°C</div>
<div style="left:77.5px;top:1324.5px;height:23px;line-height:23px;font-size:17.5px;color:#ffffff;width:36px;">多云</div>
<svg style="left:677px;top:1307px;" width="36" height="36" viewBox="0 0 36 36"><defs><linearGradient id="wl" x1="0" y1="0" x2="1" y2="1"><stop offset="0" stop-color="#7be4ff"/><stop offset="1" stop-color="#1a9cf0"/></linearGradient></defs>
<path d="M0 1.500A1.500 1.500 0 0 1 1.500 0H17v17H0zM18.700 0H33.500A1.500 1.500 0 0 1 35 1.500V17H18.700zM0 18.700h17V35H1.500A1.500 1.500 0 0 1 0 33.500zM18.700 18.700H35V33.500a1.500 1.500 0 0 1-1.500 1.500H18.700z" fill="url(#wl)"/></svg>
<div style="left:732px;top:1300px;width:329px;height:47px;border-radius:24px;background:linear-gradient(90deg,rgba(255,255,255,.15),rgba(255,255,255,.17));border:1px solid rgba(255,255,255,.14);"></div>
<svg style="left:746px;top:1310px;" width="30" height="30" viewBox="0 0 30 30"><circle cx="13" cy="12.500" r="8.500" fill="rgba(255,255,255,.15)" stroke="#f2f2f2" stroke-width="2.200"/><path d="M19 19l6.500 7" stroke="#f2f2f2" stroke-width="2.600" stroke-linecap="round"/></svg>
<div style="left:788px;top:1310.5px;height:27px;line-height:27px;font-size:21px;color:#ececec;width:43px;">搜索</div>
<div style="left:980px;top:1305px;width:77px;height:38px;background:rgba(255,255,255,.10);border-radius:19px;"></div>
<svg style="left:1002px;top:1311.5px;" width="34" height="27" viewBox="0 0 34 27"><defs><linearGradient id="bca" x1="0" y1="0" x2="0" y2="1"><stop offset="0" stop-color="#f59f0a"/><stop offset=".5" stop-color="#e58606"/><stop offset=".5" stop-color="#c96f0b"/><stop offset="1" stop-color="#a8580c"/></linearGradient></defs>
<path d="M11.500 5V2.500a1.500 1.500 0 0 1 1.500-1.500h8a1.500 1.500 0 0 1 1.500 1.500V5" fill="none" stroke="#2b2b2b" stroke-width="2.200"/>
<rect x="0.500" y="4.500" width="33" height="22" rx="2" fill="url(#bca)"/>
<rect x="14" y="13" width="6" height="5" rx="0.800" fill="#ffd43b"/><path d="M15 14.500l2 1.500 2-1.500" stroke="#d9960b" stroke-width="0.900" fill="none"/></svg>
<div style="left:1079px;top:1317px;width:26px;height:24px;background:#5c5c5c;border-radius:2.500px;"></div>
<div style="left:1089px;top:1307px;width:27px;height:24px;border-radius:2.500px;background:linear-gradient(180deg,#ffffff,#cfcfcf);"></div>
<div style="left:1089px;top:1317px;width:16px;height:14px;background:rgba(120,120,120,.35);"></div>
<svg style="left:1145px;top:1306px;" width="38" height="36" viewBox="0 0 38 36"><defs><linearGradient id="fy" x1="0" y1="0" x2="0" y2="1"><stop offset="0" stop-color="#ffd75e"/><stop offset="1" stop-color="#f7b827"/></linearGradient><linearGradient id="fb" x1="0" y1="0" x2="0" y2="1"><stop offset="0" stop-color="#1b8fe6"/><stop offset="1" stop-color="#0c63b5"/></linearGradient></defs>
<path d="M0.500 3a2 2 0 0 1 2-2h9l3.500 3.500H10L0.500 8z" fill="#e0a020"/>
<path d="M0.500 6.500a2 2 0 0 1 2-2H35a2 2 0 0 1 2 2V32a2 2 0 0 1-2 2H2.500a2 2 0 0 1-2-2z" fill="url(#fy)"/>
<path d="M6.500 34v-8a3 3 0 0 1 3-3h18.500a3 3 0 0 1 3 3v8z" fill="url(#fb)"/><rect x="11.500" y="27" width="14.500" height="2.200" rx="1.100" fill="#0a4f96"/></svg>
<svg style="left:1210px;top:1305px;" width="40" height="40" viewBox="0 0 40 40"><defs><linearGradient id="eg" x1="0" y1="0" x2="1" y2="0"><stop offset="0" stop-color="#2fb0e8"/><stop offset=".55" stop-color="#3ccf8e"/><stop offset="1" stop-color="#7fdc4a"/></linearGradient><linearGradient id="eb" x1="0" y1="0" x2="0" y2="1"><stop offset="0" stop-color="#1b7fd4"/><stop offset="1" stop-color="#0c4f9e"/></linearGradient></defs>
<path d="M2 20C2 9 10 1.500 20 1.500S38 9 38 17.500c0 5-3.500 8-8 8-4 0-6.500-2-6.500-4.500 0-1.500 1-2 1-4 0-3-3-5.500-6.500-5.500C10.500 11.500 4 15 2 20z" fill="url(#eg)"/>
<path d="M2 20c0-5.500 6-10 14-10 5 0 8.500 3 8.500 6.500-1.500-2-4-3-6.500-3-5 0-8.500 4-8.500 9.500 0 7 5.500 12.500 13 13.500-1 .3-2 .500-3.500 .500C9.500 37 2 29.500 2 20z" fill="url(#eb)"/>
<path d="M14 30.500c6 6 17 5 22-3.500-5 3.500-11 3-14.500-.500-2-2-2.500-4.500-1.500-6.500-4 1.500-8 6-6 10.500z" fill="#1560b8"/></svg>
<svg style="left:1211px;top:1325px;" width="19.04" height="15.12" viewBox="0 0 34 27"><defs><linearGradient id="bcb" x1="0" y1="0" x2="0" y2="1"><stop offset="0" stop-color="#f59f0a"/><stop offset=".5" stop-color="#e58606"/><stop offset=".5" stop-color="#c96f0b"/><stop offset="1" stop-color="#a8580c"/></linearGradient></defs>
<path d="M11.500 5V2.500a1.500 1.500 0 0 1 1.500-1.500h8a1.500 1.500 0 0 1 1.500 1.500V5" fill="none" stroke="#2b2b2b" stroke-width="2.200"/>
<rect x="0.500" y="4.500" width="33" height="22" rx="2" fill="url(#bcb)"/>
<rect x="14" y="13" width="6" height="5" rx="0.800" fill="#ffd43b"/><path d="M15 14.500l2 1.500 2-1.500" stroke="#d9960b" stroke-width="0.900" fill="none"/></svg>
<svg style="left:1277px;top:1303px;" width="38" height="42" viewBox="0 0 38 42"><defs><linearGradient id="st" x1="0" y1="0" x2="0" y2="1"><stop offset="0" stop-color="#ffffff"/><stop offset="1" stop-color="#e4e6ea"/></linearGradient></defs>
<path d="M9.500 8V3.500a1.500 1.500 0 0 1 1.500-1.500h16a1.500 1.500 0 0 1 1.500 1.500V8" fill="none" stroke="#2aa4e8" stroke-width="2.200"/>
<path d="M1 9.500a2.500 2.500 0 0 1 2.500-2.500h31a2.500 2.500 0 0 1 2.500 2.500v24a6 6 0 0 1-6 6H7a6 6 0 0 1-6-6z" fill="url(#st)"/>
<rect x="11.500" y="15.500" width="7" height="7" fill="#f25022"/><rect x="19.700" y="15.500" width="7" height="7" fill="#7fba00"/><rect x="11.500" y="23.700" width="7" height="7" fill="#00a4ef"/><rect x="19.700" y="23.700" width="7" height="7" fill="#ffb900"/></svg>
<svg style="left:1343px;top:1304px;" width="39" height="40" viewBox="0 0 39 40"><path d="M27.500 1.500L37.500 6v28l-10 4.500z" fill="#d9a8ff"/><path d="M27.500 1.500v37L9 23.500 27.500 1.500z" fill="#8b5fc7"/>
<path d="M1.500 12.500l4-2.500 22 19.500v9z" fill="#a679e0"/><path d="M1.500 27.500l4 2.500 22-19.500v-9z" fill="#7a52b8"/><path d="M1.500 12.500v15l4 2.500v-20z" fill="#5e3d94"/>
<path d="M27.500 12.500v15l-9-7.500z" fill="#3e1247"/></svg>
<svg style="left:1408px;top:1304px;" width="40" height="42" viewBox="0 0 40 42"><defs><linearGradient id="wc" x1="0" y1="0" x2="0" y2="1"><stop offset="0" stop-color="#ffffff"/><stop offset="1" stop-color="#dcdcdc"/></linearGradient></defs>
<path d="M20 3.500c10 0 18 6.200 18 14s-8 14-18 14c-2 0-4-.3-5.800-.8L7.500 35l1.500-6.500C4.500 26 2 22 2 17.500c0-7.800 8-14 18-14z" fill="url(#wc)"/>
<path d="M17.500 11.500l4.500 3.200-4.500 3.200" fill="none" stroke="#07c160" stroke-width="1.700"/><rect x="28.500" y="12.500" width="3.200" height="3.200" fill="#07c160"/><path d="M22.500 21.500h6.500" stroke="#07c160" stroke-width="1.700"/></svg>
<div style="left:1423px;top:1347.5px;width:10px;height:3.5px;background:#9a93a0;border-radius:2px;"></div>
<svg style="left:1784px;top:1315px;" width="20" height="18" viewBox="0 0 20 18"><path d="M2.500 12.500L10 5l7.500 7.500" fill="none" stroke="#ffffff" stroke-width="2"/></svg>
<div style="left:1830px;top:1309.5px;height:29px;line-height:29px;font-size:22px;color:#ffffff;width:23px;">中</div>
<svg style="left:1876px;top:1311px;" width="30" height="28" viewBox="0 0 30 28"><path d="M16.500 6H3.500a1 1 0 0 0-1 1v12.500a1 1 0 0 0 1 1h15.500M7 24.500h11M12.500 20.500v4" fill="none" stroke="#ffffff" stroke-width="1.500"/><rect x="20" y="2.500" width="5.500" height="8" rx="1.500" fill="none" stroke="#ffffff" stroke-width="1.400"/><path d="M22.750 4.500v2.500M22.750 10.500v14" stroke="#ffffff" stroke-width="1.400"/></svg>
<svg style="left:1913px;top:1312px;" width="30" height="26" viewBox="0 0 30 26"><path d="M2.500 9.500h4l5.500-5v17l-5.500-5h-4z" fill="none" stroke="#ffffff" stroke-width="1.500" stroke-linejoin="round"/><path d="M15 9.500a5 5 0 0 1 0 7M18 6.500a9 9 0 0 1 0 13" fill="none" stroke="#ffffff" stroke-width="1.500"/><path d="M21.500 3.500a13 13 0 0 1 0 19" fill="none" stroke="#8a7a90" stroke-width="1.300"/></svg>
<div style="left:2023px;top:1300px;height:23px;line-height:23px;font-size:17.5px;color:#ffffff;letter-spacing:-0.515px;">2:01</div>
<div style="left:1963.5px;top:1324.5px;height:23px;line-height:23px;font-size:17.5px;color:#ffffff;letter-spacing:0.391px;">2024/11/15</div>
<svg style="left:2067px;top:1312px;" width="26" height="28" viewBox="0 0 26 28"><path d="M13 2.500c5 0 8 3.500 8 8.500v5l2.500 4.500H2.500L5 16v-5c0-5 3-8.500 8-8.500z" fill="#f0b8f5"/><path d="M9.500 22.500h7a3.500 3.500 0 0 1-7 0z" fill="#f0b8f5"/></svg>
</div></body></html>
